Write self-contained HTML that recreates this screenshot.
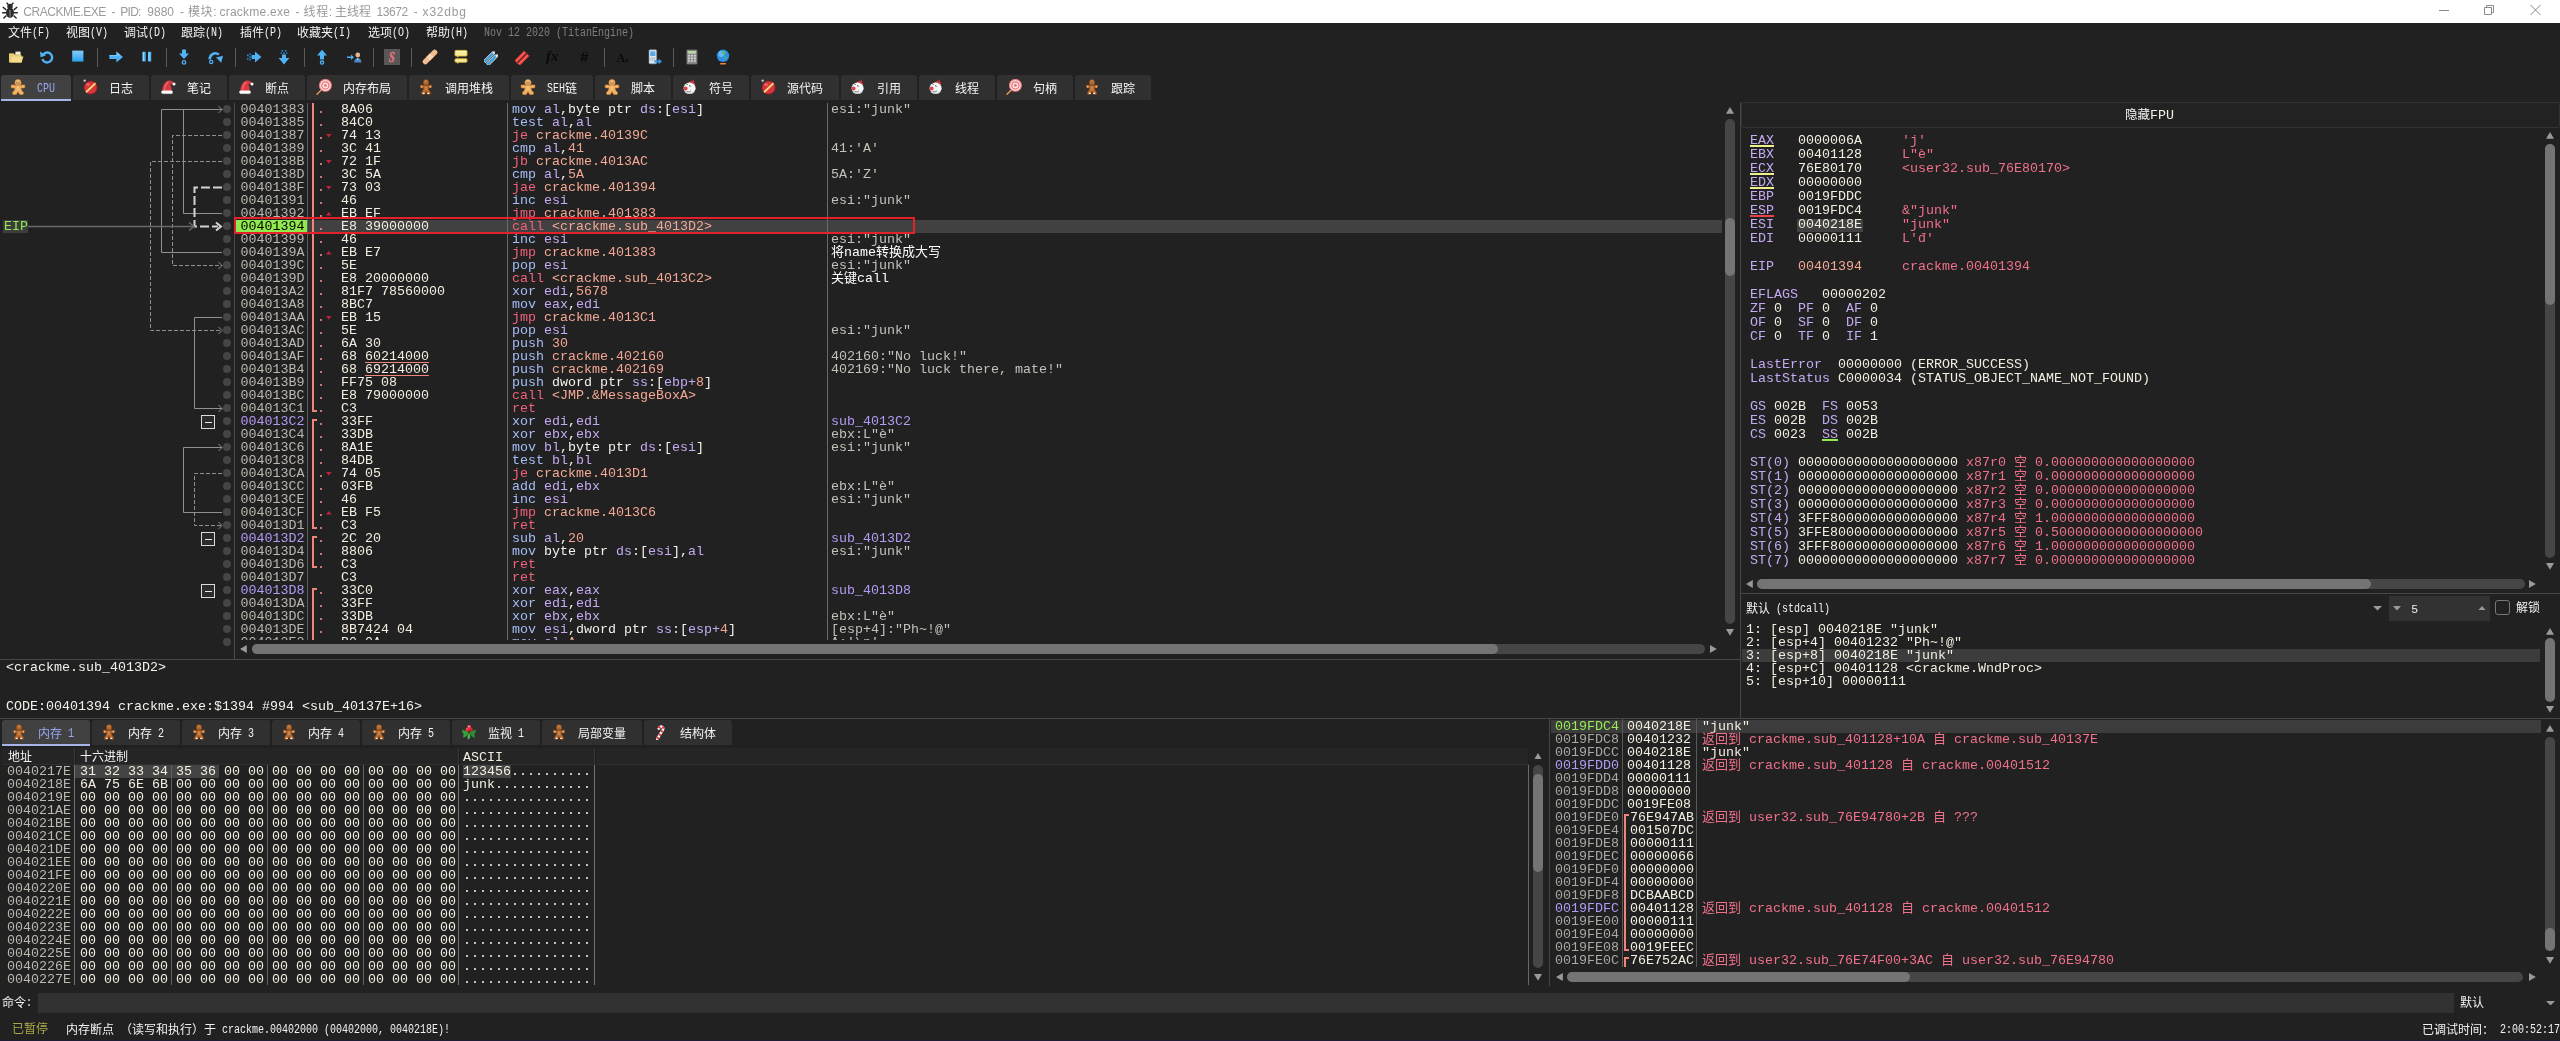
<!DOCTYPE html>
<html lang="zh-CN"><head><meta charset="utf-8"><title>x32dbg</title>
<style>
*{box-sizing:border-box;margin:0;padding:0}
html,body{width:2560px;height:1041px;overflow:hidden;background:#212121}
body{position:relative;font-family:"Liberation Mono","Noto Sans CJK SC",monospace;font-size:13.33px;line-height:13px;color:#f3eee0;-webkit-font-smoothing:antialiased}
#root{position:absolute;left:0;top:0;width:2560px;height:1041px;will-change:transform}
.a{position:absolute;white-space:pre}
.ui{font-family:"Liberation Mono","Noto Sans CJK SC",sans-serif;font-size:12px;line-height:14px;color:#f2f2f2}
.ui b,.tab b{display:inline-block;height:14px;vertical-align:top;position:relative;top:-1px;font-weight:normal;font-family:"Liberation Mono",monospace;font-size:12px;line-height:14px;white-space:pre}
.ui b i,.tab b i{display:inline-block;transform:scaleX(.833);transform-origin:0 50%;white-space:pre}
.cj{font-family:"Noto Sans CJK SC",sans-serif;font-size:12px}
i{font-style:normal}
.cj13{font-size:13px}
b{font-weight:normal}
.row{position:absolute;left:0;height:13px;white-space:pre}
.row span{position:absolute;top:0;white-space:pre}
.ln{position:absolute;background:#3f3f3f}
/* syntax */
.ad{color:#bcb8b0}
.by{color:#f3eee0}
.mn{color:#a6bef8}
.rg{color:#c4aaf2}
.wh{color:#f4f2ea}
.nm{color:#f2a593}
.jm{color:#f0627a}
.jt{color:#f4a896}
.rt{color:#f0627a}
.cm{color:#c2c2ba}
.uc{color:#ffffff}
.lb{color:#b49af4}
.pk{color:#f0708a}
.dot{color:#f4978a}
.tab{position:absolute;top:75px;height:25px;background:#303030;border-radius:3px 3px 0 0}
.tab.act{background:#414141;height:26px;border-bottom:2px solid #a6b4ea}
.tab .tx{position:absolute;left:36px;top:8px;font-size:12px;line-height:14px;color:#f4f4f4;white-space:pre;font-family:"Liberation Mono","Noto Sans CJK SC",sans-serif}
.tab.act .tx{color:#9aa6f2}
.tab svg{position:absolute;left:9px;top:4px}
.sb{position:absolute;background:#747474;border-radius:5px}
.sbt{position:absolute;background:#464646;border-radius:5px}
</style></head>
<body>
<div id="root">
<div class="a" style="left:0px;top:0px;width:2560px;height:23px;background:#ffffff;"></div>
<div class="a" style="left:1px;top:2px;line-height:0"><svg width="18" height="18" viewBox="0 0 16 16"><ellipse cx="8" cy="9.4" rx="3.6" ry="4.6" fill="#2b2b2b"/><circle cx="8" cy="4" r="2.4" fill="#2b2b2b"/><path d="M4.6 7L1.6 4.4M11.4 7l3-2.6M4.4 9.6H1M11.6 9.6H15M4.8 12l-2.6 2.6M11.2 12l2.6 2.6M6.6 2.4L5 .6M9.4 2.4L11 .6" stroke="#2b2b2b" stroke-width="1.3" fill="none"/><rect x="7.5" y="7" width="1" height="6" fill="#888"/></svg></div>
<span class="a " style="left:23.2px;top:4px;font-family:'Liberation Sans','Noto Sans CJK SC',sans-serif;font-size:12px;line-height:16px;color:#9a9a9a;letter-spacing:-0.42px">CRACKME.EXE</span>
<span class="a " style="left:111.5px;top:4px;font-family:'Liberation Sans','Noto Sans CJK SC',sans-serif;font-size:12px;line-height:16px;color:#9a9a9a;letter-spacing:0px">-</span>
<span class="a " style="left:120.2px;top:4px;font-family:'Liberation Sans','Noto Sans CJK SC',sans-serif;font-size:12px;line-height:16px;color:#9a9a9a;letter-spacing:-0.7px">PID:</span>
<span class="a " style="left:147.3px;top:4px;font-family:'Liberation Sans','Noto Sans CJK SC',sans-serif;font-size:12px;line-height:16px;color:#9a9a9a;letter-spacing:0px">9880</span>
<span class="a " style="left:180px;top:4px;font-family:'Liberation Sans','Noto Sans CJK SC',sans-serif;font-size:12px;line-height:16px;color:#9a9a9a;letter-spacing:0px">-</span>
<span class="a " style="left:188px;top:4px;font-family:'Liberation Sans','Noto Sans CJK SC',sans-serif;font-size:12px;line-height:16px;color:#9a9a9a;letter-spacing:0.6px">模块:</span>
<span class="a " style="left:219.4px;top:4px;font-family:'Liberation Sans','Noto Sans CJK SC',sans-serif;font-size:12px;line-height:16px;color:#9a9a9a;letter-spacing:0.25px">crackme.exe</span>
<span class="a " style="left:295.5px;top:4px;font-family:'Liberation Sans','Noto Sans CJK SC',sans-serif;font-size:12px;line-height:16px;color:#9a9a9a;letter-spacing:0px">-</span>
<span class="a " style="left:303.6px;top:4px;font-family:'Liberation Sans','Noto Sans CJK SC',sans-serif;font-size:12px;line-height:16px;color:#9a9a9a;letter-spacing:0.6px">线程:</span>
<span class="a " style="left:335px;top:4px;font-family:'Liberation Sans','Noto Sans CJK SC',sans-serif;font-size:12px;line-height:16px;color:#9a9a9a;letter-spacing:0px">主线程</span>
<span class="a " style="left:376.6px;top:4px;font-family:'Liberation Sans','Noto Sans CJK SC',sans-serif;font-size:12px;line-height:16px;color:#9a9a9a;letter-spacing:-0.45px">13672</span>
<span class="a " style="left:413.8px;top:4px;font-family:'Liberation Sans','Noto Sans CJK SC',sans-serif;font-size:12px;line-height:16px;color:#9a9a9a;letter-spacing:0px">-</span>
<span class="a " style="left:422.6px;top:4px;font-family:'Liberation Sans','Noto Sans CJK SC',sans-serif;font-size:12px;line-height:16px;color:#9a9a9a;letter-spacing:0.8px">x32dbg</span>
<svg class="a" style="left:2430px;top:0" width="130" height="23"><path d="M9 10.5h10" stroke="#8a8a8a" stroke-width="1"/><path d="M54.5 7.5h7v7h-7zM56.5 7.5v-2h7v7h-2" stroke="#8a8a8a" stroke-width="1" fill="none"/><path d="M100.5 5l10 10M110.5 5l-10 10" stroke="#8a8a8a" stroke-width="1"/></svg>
<span class="a ui" style="left:8px;top:27px;">文件<b style="width:18px"><i>(F)</i></b></span>
<span class="a ui" style="left:66px;top:27px;">视图<b style="width:18px"><i>(V)</i></b></span>
<span class="a ui" style="left:124px;top:27px;">调试<b style="width:18px"><i>(D)</i></b></span>
<span class="a ui" style="left:181px;top:27px;">跟踪<b style="width:18px"><i>(N)</i></b></span>
<span class="a ui" style="left:240px;top:27px;">插件<b style="width:18px"><i>(P)</i></b></span>
<span class="a ui" style="left:297px;top:27px;">收藏夹<b style="width:18px"><i>(I)</i></b></span>
<span class="a ui" style="left:368px;top:27px;">选项<b style="width:18px"><i>(O)</i></b></span>
<span class="a ui" style="left:426px;top:27px;">帮助<b style="width:18px"><i>(H)</i></b></span>
<span class="a ui" style="left:484px;top:27px;color:#7d7d7d"><b style="width:150px"><i>Nov 12 2020 (TitanEngine)</i></b></span>
<div class="a" style="left:8px;top:49px;width:16px;height:16px;line-height:0"><svg width="16" height="16" viewBox="0 0 16 16"><path d="M1 4.2h4.6l1.2 1.4H13v2H1z" fill="#d9b85a"/>
<path d="M7.4 2.6h5.2v3.2H7.4z" fill="#f6efd3"/>
<path d="M1 13.6V5h5l1 1.2h6.6v7.4z" fill="#e9cd72"/>
<path d="M2.6 13.6L4 7.6h11.4L13.6 13.6z" fill="#f3dc8c"/></svg></div>
<div class="a" style="left:39px;top:49px;width:16px;height:16px;line-height:0"><svg width="16" height="16" viewBox="0 0 16 16"><path d="M4.2 5.4A5 5 0 1 1 3.4 10" stroke="#4fb2f5" stroke-width="2.4" fill="none"/>
<path d="M1 2.4l.6 5.8 5.4-1.6z" fill="#4fb2f5"/></svg></div>
<div class="a" style="left:70px;top:49px;width:16px;height:16px;line-height:0"><svg width="16" height="16" viewBox="0 0 16 16"><defs><linearGradient id="sg" x1="0" y1="0" x2="0" y2="1"><stop offset="0" stop-color="#86ccfb"/><stop offset="1" stop-color="#27a2f2"/></linearGradient></defs><rect x="2.2" y="1.6" width="11.2" height="11" fill="url(#sg)"/></svg></div>
<div class="a" style="left:108px;top:49px;width:16px;height:16px;line-height:0"><svg width="16" height="16" viewBox="0 0 16 16"><path d="M1.4 6h7V2.6L15 8l-6.6 5.4V10h-7z" fill="#4fb2f5"/><path d="M1.4 6h7V2.6L12 5.6v1.4H1.4z" fill="#a4dcff" opacity=".5"/></svg></div>
<div class="a" style="left:138px;top:49px;width:16px;height:16px;line-height:0"><svg width="16" height="16" viewBox="0 0 16 16"><rect x="4.4" y="2.7" width="3.3" height="9.8" rx=".5" fill="#4fb2f5"/><rect x="10" y="2.7" width="3.2" height="9.8" rx=".5" fill="#4fb2f5"/><path d="M5.4 3.2v8.8M11 3.2v8.8" stroke="#a4dcff" stroke-width=".9"/></svg></div>
<div class="a" style="left:176px;top:49px;width:16px;height:16px;line-height:0"><svg width="16" height="16" viewBox="0 0 16 16"><path d="M6 .6h4v4h3L8 10 3 4.6h3z" fill="#4fb2f5"/><circle cx="8" cy="13.4" r="1.7" fill="none" stroke="#4fb2f5" stroke-width="1.3"/></svg></div>
<div class="a" style="left:208px;top:49px;width:16px;height:16px;line-height:0"><svg width="16" height="16" viewBox="0 0 16 16"><path d="M1.6 10.4C2 5 7 2.6 10.8 5.6" stroke="#4fb2f5" stroke-width="2.6" fill="none"/><path d="M8 8.4l7-1.6-1.8 7z" fill="#4fb2f5"/><circle cx="3.2" cy="13" r="1.6" fill="none" stroke="#4fb2f5" stroke-width="1.2"/></svg></div>
<div class="a" style="left:246px;top:49px;width:16px;height:16px;line-height:0"><svg width="16" height="16" viewBox="0 0 16 16"><path d="M5.6 6H9V2.6L15.4 8 9 13.4V10H5.6z" fill="#4fb2f5"/><path d="M1 5.6h1.6v1.6H1zM3.2 7.2h1.6v1.6H3.2zM1 9h1.6v1.6H1zM3.4 4.6h1.4v1.4H3.4zM3.4 10h1.4v1.4H3.4z" fill="#2b8fdc"/></svg></div>
<div class="a" style="left:276px;top:49px;width:16px;height:16px;line-height:0"><svg width="16" height="16" viewBox="0 0 16 16"><path d="M6 5.6h4V9h3.4L8 15.4 2.6 9H6z" fill="#4fb2f5"/><path d="M5.6 1h1.6v1.6H5.6zM7.2 3.2h1.6v1.6H7.2zM9 1h1.6v1.6H9zM4.6 3.4h1.4v1.4H4.6zM10 3.4h1.4v1.4H10z" fill="#2b8fdc"/></svg></div>
<div class="a" style="left:314px;top:49px;width:16px;height:16px;line-height:0"><svg width="16" height="16" viewBox="0 0 16 16"><path d="M6 10.4h4v-4h3L8 .8 3 6.4h3z" fill="#4fb2f5"/><circle cx="8" cy="13.6" r="1.6" fill="none" stroke="#4fb2f5" stroke-width="1.3"/></svg></div>
<div class="a" style="left:346px;top:49px;width:16px;height:16px;line-height:0"><svg width="16" height="16" viewBox="0 0 16 16"><path d="M1 7.4h4V5.4l3 2.8-3 2.8V9H1z" fill="#4fb2f5"/><circle cx="11.8" cy="6" r="2.4" fill="#e9b48a"/><path d="M8.2 13.6c0-3 1.4-4.4 3.6-4.4s3.6 1.4 3.6 4.4z" fill="#4a8ad0"/><path d="M11 9.4h1.6l-.8 2.2z" fill="#fff"/></svg></div>
<div class="a" style="left:384px;top:49px;width:16px;height:16px;line-height:0"><svg width="16" height="16" viewBox="0 0 16 16"><rect x="0" y="0" width="16" height="16" fill="#585656"/><text transform="translate(8 13) scale(.72 1)" x="0" y="0" font-size="14.5" font-weight="bold" font-style="italic" font-family="Liberation Serif,serif" fill="#e0707c" stroke="#e0707c" stroke-width=".7" text-anchor="middle">S</text></svg></div>
<div class="a" style="left:422px;top:49px;width:16px;height:16px;line-height:0"><svg width="16" height="16" viewBox="0 0 16 16"><g transform="rotate(-45 8 8)"><rect x="-1.2" y="5.4" width="18.4" height="5.2" rx="2.6" fill="#f4bd8e"/><rect x="5.2" y="5.4" width="5.6" height="5.2" fill="#f9d3b0"/><path d="M5.2 5.4v5.2M10.8 5.4v5.2" stroke="#e8a878" stroke-width=".5"/></g></svg></div>
<div class="a" style="left:453px;top:49px;width:16px;height:16px;line-height:0"><svg width="16" height="16" viewBox="0 0 16 16"><rect x="2" y="1.4" width="12" height="5.6" rx="1" fill="#f6ec9c" stroke="#e3bc3c" stroke-width=".9"/><path d="M3 2.6h10" stroke="#fdf8d0" stroke-width="1"/><rect x="2" y="9.8" width="12" height="3.4" rx="1" fill="#f6ec9c" stroke="#e3bc3c" stroke-width=".9"/><path d="M4.4 7.2v1.6l1.6-1.6zM4.4 13.4v1.6l1.6-1.6z" fill="#f6ec9c"/></svg></div>
<div class="a" style="left:484px;top:49px;width:16px;height:16px;line-height:0"><svg width="16" height="16" viewBox="0 0 16 16"><g transform="rotate(-45 8 8)"><path d="M-.6 4.6h12.4l1.8 1.5-1.8 1.5H-.6z" fill="#3f9edc" stroke="#f4fbff" stroke-width=".7"/><path d="M-.6 8.8h12.4l1.8 1.5-1.8 1.5H-.6z" fill="#3f9edc" stroke="#f4fbff" stroke-width=".7"/><circle cx="11.8" cy="6.1" r=".8" fill="#f4fbff"/><circle cx="11.8" cy="10.3" r=".8" fill="#f4fbff"/></g></svg></div>
<div class="a" style="left:515px;top:49px;width:16px;height:16px;line-height:0"><svg width="16" height="16" viewBox="0 0 16 16"><g transform="rotate(-45 8 8)"><path d="M-1.4 4.4h15.2l-1.2 1.6 1.2 1.6H-1.4l1.4-1.6z" fill="#f2413c"/><path d="M-1.4 8.6h15.2l-1.2 1.6 1.2 1.6H-1.4l1.4-1.6z" fill="#f2413c"/><path d="M0 6h12.6M0 10.2h12.6" stroke="#ff8e86" stroke-width=".6"/></g></svg></div>
<div class="a" style="left:545px;top:49px;width:16px;height:16px;line-height:0"><svg width="16" height="16" viewBox="0 0 16 16"><text x="1" y="12" font-size="15" font-style="italic" font-weight="bold" font-family="Liberation Serif,serif" fill="#0a0a0a">fx</text></svg></div>
<div class="a" style="left:577px;top:49px;width:16px;height:16px;line-height:0"><svg width="16" height="16" viewBox="0 0 16 16"><text x="3" y="13.4" font-size="15" font-style="italic" font-weight="bold" font-family="Liberation Sans,sans-serif" fill="#0a0a0a">#</text></svg></div>
<div class="a" style="left:615px;top:49px;width:16px;height:16px;line-height:0"><svg width="16" height="16" viewBox="0 0 16 16"><text x="1.4" y="12.6" font-size="12" font-weight="bold" font-family="Liberation Serif,serif" fill="#0a0a0a">A</text><text x="10.4" y="12.6" font-size="7" font-weight="bold" font-family="Liberation Serif,serif" fill="#0a0a0a">z</text></svg></div>
<div class="a" style="left:647px;top:49px;width:16px;height:16px;line-height:0"><svg width="16" height="16" viewBox="0 0 16 16"><rect x="2" y=".8" width="7.6" height="14" rx="1" fill="#dfe7ee" stroke="#8a99a8" stroke-width=".6"/><rect x="3.2" y="2.4" width="5.2" height="4.6" fill="#5aa8ea"/><path d="M3.4 8.6h1.2v1H3.4zM5.2 8.6h1.2v1H5.2zM7 8.6h1.2v1H7zM3.4 10.4h1.2v1H3.4zM5.2 10.4h1.2v1H5.2zM7 10.4h1.2v1H7z" fill="#8a99a8"/><path d="M7.4 11.4h4.2V9.6l3.6 2.8-3.6 2.8v-1.8H7.4z" fill="#2f8fe0"/></svg></div>
<div class="a" style="left:684px;top:49px;width:16px;height:16px;line-height:0"><svg width="16" height="16" viewBox="0 0 16 16"><rect x="2.6" y=".8" width="10.6" height="14.4" rx=".8" fill="#8c8c8c" stroke="#4e4e4e" stroke-width=".6"/><rect x="3.8" y="2" width="8.2" height="2.6" fill="#b7d6a4"/><path d="M4 6h1.8v1.6H4zM7 6h1.8v1.6H7zM10 6h1.8v1.6H10zM4 8.6h1.8v1.6H4zM7 8.6h1.8v1.6H7zM10 8.6h1.8v1.6H10zM4 11.2h1.8v1.6H4zM7 11.2h1.8v1.6H7zM10 11.2h1.8v1.6H10z" fill="#d9d9d9"/></svg></div>
<div class="a" style="left:715px;top:49px;width:16px;height:16px;line-height:0"><svg width="16" height="16" viewBox="0 0 16 16"><circle cx="8" cy="6.8" r="6.2" fill="#2d8fe6"/><circle cx="6.4" cy="5" r="3" fill="#6fc0f8" opacity=".8"/><path d="M7.6 2.4c1.6-.6 3 .2 3.4 1.4l-1.4 1.6-1.6-.4-1-1.6zM9.4 7.4l2 .4-.2 2-1.6.8z" fill="#4cbf5a"/><rect x="5" y="14" width="6" height="1.4" rx=".6" fill="#f08a2e"/></svg></div>
<div class="a" style="left:97px;top:48px;width:1px;height:19px;background:#5a5a5a;"></div>
<div class="a" style="left:166px;top:48px;width:1px;height:19px;background:#5a5a5a;"></div>
<div class="a" style="left:235px;top:48px;width:1px;height:19px;background:#5a5a5a;"></div>
<div class="a" style="left:304px;top:48px;width:1px;height:19px;background:#5a5a5a;"></div>
<div class="a" style="left:373px;top:48px;width:1px;height:19px;background:#5a5a5a;"></div>
<div class="a" style="left:411px;top:48px;width:1px;height:19px;background:#5a5a5a;"></div>
<div class="a" style="left:604px;top:48px;width:1px;height:19px;background:#5a5a5a;"></div>
<div class="a" style="left:673px;top:48px;width:1px;height:19px;background:#5a5a5a;"></div>
<div class="tab act" style="left:1px;top:75px;width:70px"><svg width="16" height="16" viewBox="0 0 16 16"><g stroke="#df8a33" stroke-width=".6">
<circle cx="8" cy="3.6" r="3.1" fill="#f1b267"/>
<path d="M1 6.3c2-.6 4-.4 5 .1h4c1-.5 3-.7 5-.1l-.3 2.4c-1.6.3-2.8.3-3.7 0l.4 2.4 2.2 2.6-.6 1.9h-3.2L8 12.6 6.2 15.6H3l-.6-1.9 2.2-2.6.4-2.4c-.9.3-2.1.3-3.7 0z" fill="#f1b267"/>
<g stroke="none"><ellipse cx="8" cy="3.2" rx="2.2" ry="1.9" fill="#f8cf94" opacity=".75"/>
<circle cx="6.9" cy="3.1" r=".55" fill="#5a2d0c"/><circle cx="9.1" cy="3.1" r=".55" fill="#5a2d0c"/>
<circle cx="8" cy="8" r=".6" fill="#fff3d6"/><circle cx="8" cy="10" r=".6" fill="#fff3d6"/></g>
<path d="M6.6 4.5q1.4 1 2.8 0" stroke="#5a2d0c" stroke-width=".6" fill="none"/>
<g stroke="none"></g></g></svg><span class="tx"><b style="width:18px"><i>CPU</i></b></span></div>
<div class="tab" style="left:73px;top:75px;width:76px"><svg width="16" height="16" viewBox="0 0 16 16"><rect x="1.6" y=".6" width="2.2" height="2.2" transform="rotate(-40 2.7 1.7)" fill="#bdbdbd"/>
<circle cx="8.6" cy="8.6" r="6.6" fill="#d5343a"/>
<circle cx="8.6" cy="8.6" r="6.6" fill="none" stroke="#8e1a1f" stroke-width=".8"/>
<path d="M3.4 12.6L12.8 3.6l1.3 1.5L4.8 14z" fill="#f3c969"/>
<path d="M4 13.2L13.4 4.2" stroke="#fff1b8" stroke-width=".7"/>
<ellipse cx="6" cy="5.6" rx="2" ry="1.3" fill="#ef7b7e" opacity=".7"/></svg><span class="tx">日志</span></div>
<div class="tab" style="left:151px;top:75px;width:76px"><svg width="16" height="16" viewBox="0 0 16 16"><path d="M2.2 12.2C2.6 6.5 5 2 9.2 1.6c2.3-.2 4 1 4.8 3.2l-1.4.9c-.8-1-1.7-1.2-2.4-.8 1.2 2.2 1.7 4.6 1.7 7.3z" fill="#d73a3f"/>
<path d="M4.5 11c.3-3.6 1.7-6.6 4-8" stroke="#f07277" stroke-width="1.1" fill="none"/>
<rect x="1.2" y="11.4" width="11.6" height="3.4" rx="1.7" fill="#fdfdfd"/>
<circle cx="14" cy="5" r="1.5" fill="#fdfdfd"/>
<path d="M2 14.6h10.4" stroke="#c9c9c9" stroke-width=".7"/></svg><span class="tx">笔记</span></div>
<div class="tab" style="left:229px;top:75px;width:76px"><svg width="16" height="16" viewBox="0 0 16 16"><path d="M2.2 12.2C2.6 6.5 5 2 9.2 1.6c2.3-.2 4 1 4.8 3.2l-1.4.9c-.8-1-1.7-1.2-2.4-.8 1.2 2.2 1.7 4.6 1.7 7.3z" fill="#d73a3f"/>
<path d="M4.5 11c.3-3.6 1.7-6.6 4-8" stroke="#f07277" stroke-width="1.1" fill="none"/>
<rect x="1.2" y="11.4" width="11.6" height="3.4" rx="1.7" fill="#fdfdfd"/>
<circle cx="14" cy="5" r="1.5" fill="#fdfdfd"/>
<path d="M2 14.6h10.4" stroke="#c9c9c9" stroke-width=".7"/></svg><span class="tx">断点</span></div>
<div class="tab" style="left:307px;top:75px;width:100px"><svg width="16" height="16" viewBox="0 0 16 16"><path d="M1 15.2L6.2 10" stroke="#e8a25a" stroke-width="1.3" stroke-linecap="round"/>
<circle cx="9.4" cy="6.4" r="5.9" fill="#fbe4e4"/>
<circle cx="9.4" cy="6.4" r="5.9" fill="none" stroke="#ee7c80" stroke-width="1.1"/>
<circle cx="9.4" cy="6.4" r="3.6" fill="none" stroke="#ee6b70" stroke-width="1.2"/>
<circle cx="9.4" cy="6.4" r="1.4" fill="#ee6b70"/></svg><span class="tx">内存布局</span></div>
<div class="tab" style="left:409px;top:75px;width:100px"><svg width="16" height="16" viewBox="0 0 16 16"><g transform="translate(8 0) scale(.86 1) translate(-8 0)" stroke="#7a3f14" stroke-width=".6">
<circle cx="8" cy="3.6" r="3.1" fill="#b96a2c"/>
<path d="M1 6.3c2-.6 4-.4 5 .1h4c1-.5 3-.7 5-.1l-.3 2.4c-1.6.3-2.8.3-3.7 0l.4 2.4 2.2 2.6-.6 1.9h-3.2L8 12.6 6.2 15.6H3l-.6-1.9 2.2-2.6.4-2.4c-.9.3-2.1.3-3.7 0z" fill="#b96a2c"/>
<g stroke="none"><ellipse cx="8" cy="3.2" rx="2.2" ry="1.9" fill="#dc9650" opacity=".75"/>
<circle cx="6.9" cy="3.1" r=".55" fill="#5a2d0c"/><circle cx="9.1" cy="3.1" r=".55" fill="#5a2d0c"/>
<circle cx="8" cy="8" r=".6" fill="#fff3d6"/><circle cx="8" cy="10" r=".6" fill="#fff3d6"/></g>
<path d="M6.6 4.5q1.4 1 2.8 0" stroke="#5a2d0c" stroke-width=".6" fill="none"/>
<g stroke="none"><path d="M2.6 7.4l1 .9M13.4 7.4l-1 .9M4.4 14.4h2M9.6 14.4h2" stroke="#fff" stroke-width="1.1" fill="none"/></g></g></svg><span class="tx">调用堆栈</span></div>
<div class="tab" style="left:511px;top:75px;width:82px"><svg width="16" height="16" viewBox="0 0 16 16"><g stroke="#df8a33" stroke-width=".6">
<circle cx="8" cy="3.6" r="3.1" fill="#f1b267"/>
<path d="M1 6.3c2-.6 4-.4 5 .1h4c1-.5 3-.7 5-.1l-.3 2.4c-1.6.3-2.8.3-3.7 0l.4 2.4 2.2 2.6-.6 1.9h-3.2L8 12.6 6.2 15.6H3l-.6-1.9 2.2-2.6.4-2.4c-.9.3-2.1.3-3.7 0z" fill="#f1b267"/>
<g stroke="none"><ellipse cx="8" cy="3.2" rx="2.2" ry="1.9" fill="#f8cf94" opacity=".75"/>
<circle cx="6.9" cy="3.1" r=".55" fill="#5a2d0c"/><circle cx="9.1" cy="3.1" r=".55" fill="#5a2d0c"/>
<circle cx="8" cy="8" r=".6" fill="#fff3d6"/><circle cx="8" cy="10" r=".6" fill="#fff3d6"/></g>
<path d="M6.6 4.5q1.4 1 2.8 0" stroke="#5a2d0c" stroke-width=".6" fill="none"/>
<g stroke="none"></g></g></svg><span class="tx"><b style="width:18px"><i>SEH</i></b>链</span></div>
<div class="tab" style="left:595px;top:75px;width:76px"><svg width="16" height="16" viewBox="0 0 16 16"><g stroke="#df8a33" stroke-width=".6">
<circle cx="8" cy="3.6" r="3.1" fill="#f1b267"/>
<path d="M1 6.3c2-.6 4-.4 5 .1h4c1-.5 3-.7 5-.1l-.3 2.4c-1.6.3-2.8.3-3.7 0l.4 2.4 2.2 2.6-.6 1.9h-3.2L8 12.6 6.2 15.6H3l-.6-1.9 2.2-2.6.4-2.4c-.9.3-2.1.3-3.7 0z" fill="#f1b267"/>
<g stroke="none"><ellipse cx="8" cy="3.2" rx="2.2" ry="1.9" fill="#f8cf94" opacity=".75"/>
<circle cx="6.9" cy="3.1" r=".55" fill="#5a2d0c"/><circle cx="9.1" cy="3.1" r=".55" fill="#5a2d0c"/>
<circle cx="8" cy="8" r=".6" fill="#fff3d6"/><circle cx="8" cy="10" r=".6" fill="#fff3d6"/></g>
<path d="M6.6 4.5q1.4 1 2.8 0" stroke="#5a2d0c" stroke-width=".6" fill="none"/>
<g stroke="none"></g></g></svg><span class="tx">脚本</span></div>
<div class="tab" style="left:673px;top:75px;width:76px"><svg width="16" height="16" viewBox="0 0 16 16"><path d="M6 3.4L12.6.6l1.6 5.8z" fill="#c4383c"/>
<path d="M11.6 1.2l1.2-.6 1.6 5.6-1 .2z" fill="#3a2a2a"/>
<ellipse cx="7.6" cy="9.2" rx="6" ry="5.6" fill="#f4f6f6"/>
<path d="M3 12.6c2.4 2.4 6.6 2.6 9.2 0" stroke="#c7cccc" stroke-width="1.2" fill="none"/>
<circle cx="3.6" cy="9.6" r="2" fill="#e3444b"/>
<path d="M7 6.6l1.6.8M5 6l.2-.9" stroke="#333" stroke-width=".9"/>
<path d="M4.6 12.4q2.4 1.4 4.6-.6" stroke="#555" stroke-width=".7" fill="none"/></svg><span class="tx">符号</span></div>
<div class="tab" style="left:751px;top:75px;width:88px"><svg width="16" height="16" viewBox="0 0 16 16"><rect x="1.6" y=".6" width="2.2" height="2.2" transform="rotate(-40 2.7 1.7)" fill="#bdbdbd"/>
<circle cx="8.6" cy="8.6" r="6.6" fill="#d5343a"/>
<circle cx="8.6" cy="8.6" r="6.6" fill="none" stroke="#8e1a1f" stroke-width=".8"/>
<path d="M3.4 12.6L12.8 3.6l1.3 1.5L4.8 14z" fill="#f3c969"/>
<path d="M4 13.2L13.4 4.2" stroke="#fff1b8" stroke-width=".7"/>
<ellipse cx="6" cy="5.6" rx="2" ry="1.3" fill="#ef7b7e" opacity=".7"/></svg><span class="tx">源代码</span></div>
<div class="tab" style="left:841px;top:75px;width:76px"><svg width="16" height="16" viewBox="0 0 16 16"><path d="M6 3.4L12.6.6l1.6 5.8z" fill="#c4383c"/>
<path d="M11.6 1.2l1.2-.6 1.6 5.6-1 .2z" fill="#3a2a2a"/>
<ellipse cx="7.6" cy="9.2" rx="6" ry="5.6" fill="#f4f6f6"/>
<path d="M3 12.6c2.4 2.4 6.6 2.6 9.2 0" stroke="#c7cccc" stroke-width="1.2" fill="none"/>
<circle cx="3.6" cy="9.6" r="2" fill="#e3444b"/>
<path d="M7 6.6l1.6.8M5 6l.2-.9" stroke="#333" stroke-width=".9"/>
<path d="M4.6 12.4q2.4 1.4 4.6-.6" stroke="#555" stroke-width=".7" fill="none"/></svg><span class="tx">引用</span></div>
<div class="tab" style="left:919px;top:75px;width:76px"><svg width="16" height="16" viewBox="0 0 16 16"><path d="M6 3.4L12.6.6l1.6 5.8z" fill="#c4383c"/>
<path d="M11.6 1.2l1.2-.6 1.6 5.6-1 .2z" fill="#3a2a2a"/>
<ellipse cx="7.6" cy="9.2" rx="6" ry="5.6" fill="#f4f6f6"/>
<path d="M3 12.6c2.4 2.4 6.6 2.6 9.2 0" stroke="#c7cccc" stroke-width="1.2" fill="none"/>
<circle cx="3.6" cy="9.6" r="2" fill="#e3444b"/>
<path d="M7 6.6l1.6.8M5 6l.2-.9" stroke="#333" stroke-width=".9"/>
<path d="M4.6 12.4q2.4 1.4 4.6-.6" stroke="#555" stroke-width=".7" fill="none"/></svg><span class="tx">线程</span></div>
<div class="tab" style="left:997px;top:75px;width:76px"><svg width="16" height="16" viewBox="0 0 16 16"><path d="M1 15.2L6.2 10" stroke="#e8a25a" stroke-width="1.3" stroke-linecap="round"/>
<circle cx="9.4" cy="6.4" r="5.9" fill="#fbe4e4"/>
<circle cx="9.4" cy="6.4" r="5.9" fill="none" stroke="#ee7c80" stroke-width="1.1"/>
<circle cx="9.4" cy="6.4" r="3.6" fill="none" stroke="#ee6b70" stroke-width="1.2"/>
<circle cx="9.4" cy="6.4" r="1.4" fill="#ee6b70"/></svg><span class="tx">句柄</span></div>
<div class="tab" style="left:1075px;top:75px;width:76px"><svg width="16" height="16" viewBox="0 0 16 16"><g transform="translate(8 0) scale(.86 1) translate(-8 0)" stroke="#7a3f14" stroke-width=".6">
<circle cx="8" cy="3.6" r="3.1" fill="#b96a2c"/>
<path d="M1 6.3c2-.6 4-.4 5 .1h4c1-.5 3-.7 5-.1l-.3 2.4c-1.6.3-2.8.3-3.7 0l.4 2.4 2.2 2.6-.6 1.9h-3.2L8 12.6 6.2 15.6H3l-.6-1.9 2.2-2.6.4-2.4c-.9.3-2.1.3-3.7 0z" fill="#b96a2c"/>
<g stroke="none"><ellipse cx="8" cy="3.2" rx="2.2" ry="1.9" fill="#dc9650" opacity=".75"/>
<circle cx="6.9" cy="3.1" r=".55" fill="#5a2d0c"/><circle cx="9.1" cy="3.1" r=".55" fill="#5a2d0c"/>
<circle cx="8" cy="8" r=".6" fill="#fff3d6"/><circle cx="8" cy="10" r=".6" fill="#fff3d6"/></g>
<path d="M6.6 4.5q1.4 1 2.8 0" stroke="#5a2d0c" stroke-width=".6" fill="none"/>
<g stroke="none"><path d="M2.6 7.4l1 .9M13.4 7.4l-1 .9M4.4 14.4h2M9.6 14.4h2" stroke="#fff" stroke-width="1.1" fill="none"/></g></g></svg><span class="tx">跟踪</span></div>
<div class="a" style="left:0;top:102px;width:1722px;height:538px;overflow:hidden">
<div class="a" style="left:308px;top:118.0px;width:1414px;height:13px;background:#414141"></div>
<div class="a" style="left:234px;top:1px;width:1px;height:537px;background:#4a4a4a"></div>
<div class="a" style="left:307px;top:1px;width:1px;height:537px;background:#5c5c5c"></div>
<div class="a" style="left:507px;top:1px;width:1px;height:537px;background:#6a6a6a"></div>
<div class="a" style="left:827px;top:1px;width:1px;height:537px;background:#6a6a6a"></div>
<div class="a" style="left:312px;top:0.5px;width:2px;height:309.0px;background:#f2837a"></div>
<div class="a" style="left:312px;top:307.5px;width:5px;height:2px;background:#f2837a"></div>
<div class="a" style="left:312px;top:316.5px;width:2px;height:110.0px;background:#f2837a"></div>
<div class="a" style="left:312px;top:316.5px;width:5px;height:2px;background:#f2837a"></div>
<div class="a" style="left:312px;top:424.5px;width:5px;height:2px;background:#f2837a"></div>
<div class="a" style="left:312px;top:433.5px;width:2px;height:32.0px;background:#f2837a"></div>
<div class="a" style="left:312px;top:433.5px;width:5px;height:2px;background:#f2837a"></div>
<div class="a" style="left:312px;top:463.5px;width:5px;height:2px;background:#f2837a"></div>
<div class="a" style="left:312px;top:485.5px;width:2px;height:61.0px;background:#f2837a"></div>
<div class="a" style="left:312px;top:485.5px;width:5px;height:2px;background:#f2837a"></div>
<div class="a" style="left:223.3px;top:3.1px;width:8px;height:8px;border-radius:4px;background:#454545"></div>
<span class="a ad" style="left:240.5px;top:0.5px;">00401383</span>
<span class="a dot" style="left:317px;top:0.5px;">.</span>
<span class="a by" style="left:341px;top:0.5px;">8A06</span>
<span class="a " style="left:512px;top:0.5px;"><i class="mn">mov</i> <i class="rg">al</i><i class="wh">,</i><i class="wh">byte ptr</i> <i class="rg">ds</i><i class="wh">:</i><i class="wh">[</i><i class="rg">esi</i><i class="wh">]</i></span>
<span class="a cm" style="left:831px;top:0.5px;">esi:"junk"</span>
<div class="a" style="left:223.3px;top:16.1px;width:8px;height:8px;border-radius:4px;background:#454545"></div>
<span class="a ad" style="left:240.5px;top:13.5px;">00401385</span>
<span class="a dot" style="left:317px;top:13.5px;">.</span>
<span class="a by" style="left:341px;top:13.5px;">84C0</span>
<span class="a " style="left:512px;top:13.5px;"><i class="mn">test</i> <i class="rg">al</i><i class="wh">,</i><i class="rg">al</i></span>
<div class="a" style="left:223.3px;top:29.1px;width:8px;height:8px;border-radius:4px;background:#454545"></div>
<span class="a ad" style="left:240.5px;top:26.5px;">00401387</span>
<span class="a dot" style="left:317px;top:26.5px;">.</span>
<svg class="a" style="left:325.5px;top:31.5px" width="6" height="4"><path d="M0 0L5.6 0L2.8 3.4z" fill="#c2213c"/></svg>
<span class="a by" style="left:341px;top:26.5px;">74 13</span>
<span class="a " style="left:512px;top:26.5px;"><i class="jm">je</i> <i class="jt">crackme.40139C</i></span>
<div class="a" style="left:223.3px;top:42.1px;width:8px;height:8px;border-radius:4px;background:#454545"></div>
<span class="a ad" style="left:240.5px;top:39.5px;">00401389</span>
<span class="a dot" style="left:317px;top:39.5px;">.</span>
<span class="a by" style="left:341px;top:39.5px;">3C 41</span>
<span class="a " style="left:512px;top:39.5px;"><i class="mn">cmp</i> <i class="rg">al</i><i class="wh">,</i><i class="nm">41</i></span>
<span class="a cm" style="left:831px;top:39.5px;">41:'A'</span>
<div class="a" style="left:223.3px;top:55.1px;width:8px;height:8px;border-radius:4px;background:#454545"></div>
<span class="a ad" style="left:240.5px;top:52.5px;">0040138B</span>
<span class="a dot" style="left:317px;top:52.5px;">.</span>
<svg class="a" style="left:325.5px;top:57.5px" width="6" height="4"><path d="M0 0L5.6 0L2.8 3.4z" fill="#c2213c"/></svg>
<span class="a by" style="left:341px;top:52.5px;">72 1F</span>
<span class="a " style="left:512px;top:52.5px;"><i class="jm">jb</i> <i class="jt">crackme.4013AC</i></span>
<div class="a" style="left:223.3px;top:68.1px;width:8px;height:8px;border-radius:4px;background:#454545"></div>
<span class="a ad" style="left:240.5px;top:65.5px;">0040138D</span>
<span class="a dot" style="left:317px;top:65.5px;">.</span>
<span class="a by" style="left:341px;top:65.5px;">3C 5A</span>
<span class="a " style="left:512px;top:65.5px;"><i class="mn">cmp</i> <i class="rg">al</i><i class="wh">,</i><i class="nm">5A</i></span>
<span class="a cm" style="left:831px;top:65.5px;">5A:'Z'</span>
<div class="a" style="left:223.3px;top:81.1px;width:8px;height:8px;border-radius:4px;background:#454545"></div>
<span class="a ad" style="left:240.5px;top:78.5px;">0040138F</span>
<span class="a dot" style="left:317px;top:78.5px;">.</span>
<svg class="a" style="left:325.5px;top:83.5px" width="6" height="4"><path d="M0 0L5.6 0L2.8 3.4z" fill="#c2213c"/></svg>
<span class="a by" style="left:341px;top:78.5px;">73 03</span>
<span class="a " style="left:512px;top:78.5px;"><i class="jm">jae</i> <i class="jt">crackme.401394</i></span>
<div class="a" style="left:223.3px;top:94.1px;width:8px;height:8px;border-radius:4px;background:#454545"></div>
<span class="a ad" style="left:240.5px;top:91.5px;">00401391</span>
<span class="a dot" style="left:317px;top:91.5px;">.</span>
<span class="a by" style="left:341px;top:91.5px;">46</span>
<span class="a " style="left:512px;top:91.5px;"><i class="mn">inc</i> <i class="rg">esi</i></span>
<span class="a cm" style="left:831px;top:91.5px;">esi:"junk"</span>
<div class="a" style="left:223.3px;top:107.1px;width:8px;height:8px;border-radius:4px;background:#454545"></div>
<span class="a ad" style="left:240.5px;top:104.5px;">00401392</span>
<span class="a dot" style="left:317px;top:104.5px;">.</span>
<svg class="a" style="left:325.5px;top:109.5px" width="6" height="4"><path d="M0 3.4L5.6 3.4L2.8 0z" fill="#c2213c"/></svg>
<span class="a by" style="left:341px;top:104.5px;">EB EF</span>
<span class="a " style="left:512px;top:104.5px;"><i class="jm">jmp</i> <i class="jt">crackme.401383</i></span>
<div class="a" style="left:223.3px;top:120.1px;width:8px;height:8px;border-radius:4px;background:#454545"></div>
<div class="a" style="left:235px;top:118.0px;width:72px;height:12px;background:#8fea4d"></div>
<span class="a " style="left:240.5px;top:117.5px;color:#000">00401394</span>
<span class="a dot" style="left:317px;top:117.5px;">.</span>
<span class="a by" style="left:341px;top:117.5px;">E8 39000000</span>
<span class="a " style="left:512px;top:117.5px;"><i class="jm">call</i> <i class="jt">&lt;crackme.sub_4013D2&gt;</i></span>
<div class="a" style="left:223.3px;top:133.1px;width:8px;height:8px;border-radius:4px;background:#454545"></div>
<span class="a ad" style="left:240.5px;top:130.5px;">00401399</span>
<span class="a dot" style="left:317px;top:130.5px;">.</span>
<span class="a by" style="left:341px;top:130.5px;">46</span>
<span class="a " style="left:512px;top:130.5px;"><i class="mn">inc</i> <i class="rg">esi</i></span>
<span class="a cm" style="left:831px;top:130.5px;">esi:"junk"</span>
<div class="a" style="left:223.3px;top:146.1px;width:8px;height:8px;border-radius:4px;background:#454545"></div>
<span class="a ad" style="left:240.5px;top:143.5px;">0040139A</span>
<span class="a dot" style="left:317px;top:143.5px;">.</span>
<svg class="a" style="left:325.5px;top:148.5px" width="6" height="4"><path d="M0 3.4L5.6 3.4L2.8 0z" fill="#c2213c"/></svg>
<span class="a by" style="left:341px;top:143.5px;">EB E7</span>
<span class="a " style="left:512px;top:143.5px;"><i class="jm">jmp</i> <i class="jt">crackme.401383</i></span>
<span class="a uc" style="left:831px;top:143.5px;"><i class="cj13">将</i>name<i class="cj13">转换成大写</i></span>
<div class="a" style="left:223.3px;top:159.1px;width:8px;height:8px;border-radius:4px;background:#454545"></div>
<span class="a ad" style="left:240.5px;top:156.5px;">0040139C</span>
<span class="a dot" style="left:317px;top:156.5px;">.</span>
<span class="a by" style="left:341px;top:156.5px;">5E</span>
<span class="a " style="left:512px;top:156.5px;"><i class="mn">pop</i> <i class="rg">esi</i></span>
<span class="a cm" style="left:831px;top:156.5px;">esi:"junk"</span>
<div class="a" style="left:223.3px;top:172.1px;width:8px;height:8px;border-radius:4px;background:#454545"></div>
<span class="a ad" style="left:240.5px;top:169.5px;">0040139D</span>
<span class="a dot" style="left:317px;top:169.5px;">.</span>
<span class="a by" style="left:341px;top:169.5px;">E8 20000000</span>
<span class="a " style="left:512px;top:169.5px;"><i class="jm">call</i> <i class="jt">&lt;crackme.sub_4013C2&gt;</i></span>
<span class="a uc" style="left:831px;top:169.5px;"><i class="cj13">关键</i>call</span>
<div class="a" style="left:223.3px;top:185.1px;width:8px;height:8px;border-radius:4px;background:#454545"></div>
<span class="a ad" style="left:240.5px;top:182.5px;">004013A2</span>
<span class="a dot" style="left:317px;top:182.5px;">.</span>
<span class="a by" style="left:341px;top:182.5px;">81F7 78560000</span>
<span class="a " style="left:512px;top:182.5px;"><i class="mn">xor</i> <i class="rg">edi</i><i class="wh">,</i><i class="nm">5678</i></span>
<div class="a" style="left:223.3px;top:198.1px;width:8px;height:8px;border-radius:4px;background:#454545"></div>
<span class="a ad" style="left:240.5px;top:195.5px;">004013A8</span>
<span class="a dot" style="left:317px;top:195.5px;">.</span>
<span class="a by" style="left:341px;top:195.5px;">8BC7</span>
<span class="a " style="left:512px;top:195.5px;"><i class="mn">mov</i> <i class="rg">eax</i><i class="wh">,</i><i class="rg">edi</i></span>
<div class="a" style="left:223.3px;top:211.1px;width:8px;height:8px;border-radius:4px;background:#454545"></div>
<span class="a ad" style="left:240.5px;top:208.5px;">004013AA</span>
<span class="a dot" style="left:317px;top:208.5px;">.</span>
<svg class="a" style="left:325.5px;top:213.5px" width="6" height="4"><path d="M0 0L5.6 0L2.8 3.4z" fill="#c2213c"/></svg>
<span class="a by" style="left:341px;top:208.5px;">EB 15</span>
<span class="a " style="left:512px;top:208.5px;"><i class="jm">jmp</i> <i class="jt">crackme.4013C1</i></span>
<div class="a" style="left:223.3px;top:224.1px;width:8px;height:8px;border-radius:4px;background:#454545"></div>
<span class="a ad" style="left:240.5px;top:221.5px;">004013AC</span>
<span class="a dot" style="left:317px;top:221.5px;">.</span>
<span class="a by" style="left:341px;top:221.5px;">5E</span>
<span class="a " style="left:512px;top:221.5px;"><i class="mn">pop</i> <i class="rg">esi</i></span>
<span class="a cm" style="left:831px;top:221.5px;">esi:"junk"</span>
<div class="a" style="left:223.3px;top:237.1px;width:8px;height:8px;border-radius:4px;background:#454545"></div>
<span class="a ad" style="left:240.5px;top:234.5px;">004013AD</span>
<span class="a dot" style="left:317px;top:234.5px;">.</span>
<span class="a by" style="left:341px;top:234.5px;">6A 30</span>
<span class="a " style="left:512px;top:234.5px;"><i class="mn">push</i> <i class="nm">30</i></span>
<div class="a" style="left:223.3px;top:250.1px;width:8px;height:8px;border-radius:4px;background:#454545"></div>
<span class="a ad" style="left:240.5px;top:247.5px;">004013AF</span>
<span class="a dot" style="left:317px;top:247.5px;">.</span>
<span class="a by" style="left:341px;top:247.5px;">68 <u style="text-decoration:underline;text-decoration-color:#f2837a;text-decoration-thickness:1px;text-underline-offset:1.5px">60214000</u></span>
<span class="a " style="left:512px;top:247.5px;"><i class="mn">push</i> <i class="nm">crackme.402160</i></span>
<span class="a cm" style="left:831px;top:247.5px;">402160:"No luck!"</span>
<div class="a" style="left:223.3px;top:263.1px;width:8px;height:8px;border-radius:4px;background:#454545"></div>
<span class="a ad" style="left:240.5px;top:260.5px;">004013B4</span>
<span class="a dot" style="left:317px;top:260.5px;">.</span>
<span class="a by" style="left:341px;top:260.5px;">68 <u style="text-decoration:underline;text-decoration-color:#f2837a;text-decoration-thickness:1px;text-underline-offset:1.5px">69214000</u></span>
<span class="a " style="left:512px;top:260.5px;"><i class="mn">push</i> <i class="nm">crackme.402169</i></span>
<span class="a cm" style="left:831px;top:260.5px;">402169:"No luck there, mate!"</span>
<div class="a" style="left:223.3px;top:276.1px;width:8px;height:8px;border-radius:4px;background:#454545"></div>
<span class="a ad" style="left:240.5px;top:273.5px;">004013B9</span>
<span class="a dot" style="left:317px;top:273.5px;">.</span>
<span class="a by" style="left:341px;top:273.5px;">FF75 08</span>
<span class="a " style="left:512px;top:273.5px;"><i class="mn">push</i> <i class="wh">dword ptr</i> <i class="rg">ss</i><i class="wh">:</i><i class="wh">[</i><i class="rg">ebp</i><i class="rg">+</i><i class="nm">8</i><i class="wh">]</i></span>
<div class="a" style="left:223.3px;top:289.1px;width:8px;height:8px;border-radius:4px;background:#454545"></div>
<span class="a ad" style="left:240.5px;top:286.5px;">004013BC</span>
<span class="a dot" style="left:317px;top:286.5px;">.</span>
<span class="a by" style="left:341px;top:286.5px;">E8 79000000</span>
<span class="a " style="left:512px;top:286.5px;"><i class="jm">call</i> <i class="jt">&lt;JMP.&amp;MessageBoxA&gt;</i></span>
<div class="a" style="left:223.3px;top:302.1px;width:8px;height:8px;border-radius:4px;background:#454545"></div>
<span class="a ad" style="left:240.5px;top:299.5px;">004013C1</span>
<span class="a dot" style="left:317px;top:299.5px;">.</span>
<span class="a by" style="left:341px;top:299.5px;">C3</span>
<span class="a " style="left:512px;top:299.5px;"><i class="rt">ret</i></span>
<div class="a" style="left:223.3px;top:315.1px;width:8px;height:8px;border-radius:4px;background:#454545"></div>
<span class="a lb" style="left:240.5px;top:312.5px;">004013C2</span>
<span class="a dot" style="left:317px;top:312.5px;">.</span>
<span class="a by" style="left:341px;top:312.5px;">33FF</span>
<span class="a " style="left:512px;top:312.5px;"><i class="mn">xor</i> <i class="rg">edi</i><i class="wh">,</i><i class="rg">edi</i></span>
<span class="a lb" style="left:831px;top:312.5px;">sub_4013C2</span>
<div class="a" style="left:223.3px;top:328.1px;width:8px;height:8px;border-radius:4px;background:#454545"></div>
<span class="a ad" style="left:240.5px;top:325.5px;">004013C4</span>
<span class="a dot" style="left:317px;top:325.5px;">.</span>
<span class="a by" style="left:341px;top:325.5px;">33DB</span>
<span class="a " style="left:512px;top:325.5px;"><i class="mn">xor</i> <i class="rg">ebx</i><i class="wh">,</i><i class="rg">ebx</i></span>
<span class="a cm" style="left:831px;top:325.5px;">ebx:L"è"</span>
<div class="a" style="left:223.3px;top:341.1px;width:8px;height:8px;border-radius:4px;background:#454545"></div>
<span class="a ad" style="left:240.5px;top:338.5px;">004013C6</span>
<span class="a dot" style="left:317px;top:338.5px;">.</span>
<span class="a by" style="left:341px;top:338.5px;">8A1E</span>
<span class="a " style="left:512px;top:338.5px;"><i class="mn">mov</i> <i class="rg">bl</i><i class="wh">,</i><i class="wh">byte ptr</i> <i class="rg">ds</i><i class="wh">:</i><i class="wh">[</i><i class="rg">esi</i><i class="wh">]</i></span>
<span class="a cm" style="left:831px;top:338.5px;">esi:"junk"</span>
<div class="a" style="left:223.3px;top:354.1px;width:8px;height:8px;border-radius:4px;background:#454545"></div>
<span class="a ad" style="left:240.5px;top:351.5px;">004013C8</span>
<span class="a dot" style="left:317px;top:351.5px;">.</span>
<span class="a by" style="left:341px;top:351.5px;">84DB</span>
<span class="a " style="left:512px;top:351.5px;"><i class="mn">test</i> <i class="rg">bl</i><i class="wh">,</i><i class="rg">bl</i></span>
<div class="a" style="left:223.3px;top:367.1px;width:8px;height:8px;border-radius:4px;background:#454545"></div>
<span class="a ad" style="left:240.5px;top:364.5px;">004013CA</span>
<span class="a dot" style="left:317px;top:364.5px;">.</span>
<svg class="a" style="left:325.5px;top:369.5px" width="6" height="4"><path d="M0 0L5.6 0L2.8 3.4z" fill="#c2213c"/></svg>
<span class="a by" style="left:341px;top:364.5px;">74 05</span>
<span class="a " style="left:512px;top:364.5px;"><i class="jm">je</i> <i class="jt">crackme.4013D1</i></span>
<div class="a" style="left:223.3px;top:380.1px;width:8px;height:8px;border-radius:4px;background:#454545"></div>
<span class="a ad" style="left:240.5px;top:377.5px;">004013CC</span>
<span class="a dot" style="left:317px;top:377.5px;">.</span>
<span class="a by" style="left:341px;top:377.5px;">03FB</span>
<span class="a " style="left:512px;top:377.5px;"><i class="mn">add</i> <i class="rg">edi</i><i class="wh">,</i><i class="rg">ebx</i></span>
<span class="a cm" style="left:831px;top:377.5px;">ebx:L"è"</span>
<div class="a" style="left:223.3px;top:393.1px;width:8px;height:8px;border-radius:4px;background:#454545"></div>
<span class="a ad" style="left:240.5px;top:390.5px;">004013CE</span>
<span class="a dot" style="left:317px;top:390.5px;">.</span>
<span class="a by" style="left:341px;top:390.5px;">46</span>
<span class="a " style="left:512px;top:390.5px;"><i class="mn">inc</i> <i class="rg">esi</i></span>
<span class="a cm" style="left:831px;top:390.5px;">esi:"junk"</span>
<div class="a" style="left:223.3px;top:406.1px;width:8px;height:8px;border-radius:4px;background:#454545"></div>
<span class="a ad" style="left:240.5px;top:403.5px;">004013CF</span>
<span class="a dot" style="left:317px;top:403.5px;">.</span>
<svg class="a" style="left:325.5px;top:408.5px" width="6" height="4"><path d="M0 3.4L5.6 3.4L2.8 0z" fill="#c2213c"/></svg>
<span class="a by" style="left:341px;top:403.5px;">EB F5</span>
<span class="a " style="left:512px;top:403.5px;"><i class="jm">jmp</i> <i class="jt">crackme.4013C6</i></span>
<div class="a" style="left:223.3px;top:419.1px;width:8px;height:8px;border-radius:4px;background:#454545"></div>
<span class="a ad" style="left:240.5px;top:416.5px;">004013D1</span>
<span class="a dot" style="left:317px;top:416.5px;">.</span>
<span class="a by" style="left:341px;top:416.5px;">C3</span>
<span class="a " style="left:512px;top:416.5px;"><i class="rt">ret</i></span>
<div class="a" style="left:223.3px;top:432.1px;width:8px;height:8px;border-radius:4px;background:#454545"></div>
<span class="a lb" style="left:240.5px;top:429.5px;">004013D2</span>
<span class="a dot" style="left:317px;top:429.5px;">.</span>
<span class="a by" style="left:341px;top:429.5px;">2C 20</span>
<span class="a " style="left:512px;top:429.5px;"><i class="mn">sub</i> <i class="rg">al</i><i class="wh">,</i><i class="nm">20</i></span>
<span class="a lb" style="left:831px;top:429.5px;">sub_4013D2</span>
<div class="a" style="left:223.3px;top:445.1px;width:8px;height:8px;border-radius:4px;background:#454545"></div>
<span class="a ad" style="left:240.5px;top:442.5px;">004013D4</span>
<span class="a dot" style="left:317px;top:442.5px;">.</span>
<span class="a by" style="left:341px;top:442.5px;">8806</span>
<span class="a " style="left:512px;top:442.5px;"><i class="mn">mov</i> <i class="wh">byte ptr</i> <i class="rg">ds</i><i class="wh">:</i><i class="wh">[</i><i class="rg">esi</i><i class="wh">]</i><i class="wh">,</i><i class="rg">al</i></span>
<span class="a cm" style="left:831px;top:442.5px;">esi:"junk"</span>
<div class="a" style="left:223.3px;top:458.1px;width:8px;height:8px;border-radius:4px;background:#454545"></div>
<span class="a ad" style="left:240.5px;top:455.5px;">004013D6</span>
<span class="a dot" style="left:317px;top:455.5px;">.</span>
<span class="a by" style="left:341px;top:455.5px;">C3</span>
<span class="a " style="left:512px;top:455.5px;"><i class="rt">ret</i></span>
<div class="a" style="left:223.3px;top:471.1px;width:8px;height:8px;border-radius:4px;background:#454545"></div>
<span class="a ad" style="left:240.5px;top:468.5px;">004013D7</span>
<span class="a by" style="left:341px;top:468.5px;">C3</span>
<span class="a " style="left:512px;top:468.5px;"><i class="rt">ret</i></span>
<div class="a" style="left:223.3px;top:484.1px;width:8px;height:8px;border-radius:4px;background:#454545"></div>
<span class="a lb" style="left:240.5px;top:481.5px;">004013D8</span>
<span class="a dot" style="left:317px;top:481.5px;">.</span>
<span class="a by" style="left:341px;top:481.5px;">33C0</span>
<span class="a " style="left:512px;top:481.5px;"><i class="mn">xor</i> <i class="rg">eax</i><i class="wh">,</i><i class="rg">eax</i></span>
<span class="a lb" style="left:831px;top:481.5px;">sub_4013D8</span>
<div class="a" style="left:223.3px;top:497.1px;width:8px;height:8px;border-radius:4px;background:#454545"></div>
<span class="a ad" style="left:240.5px;top:494.5px;">004013DA</span>
<span class="a dot" style="left:317px;top:494.5px;">.</span>
<span class="a by" style="left:341px;top:494.5px;">33FF</span>
<span class="a " style="left:512px;top:494.5px;"><i class="mn">xor</i> <i class="rg">edi</i><i class="wh">,</i><i class="rg">edi</i></span>
<div class="a" style="left:223.3px;top:510.1px;width:8px;height:8px;border-radius:4px;background:#454545"></div>
<span class="a ad" style="left:240.5px;top:507.5px;">004013DC</span>
<span class="a dot" style="left:317px;top:507.5px;">.</span>
<span class="a by" style="left:341px;top:507.5px;">33DB</span>
<span class="a " style="left:512px;top:507.5px;"><i class="mn">xor</i> <i class="rg">ebx</i><i class="wh">,</i><i class="rg">ebx</i></span>
<span class="a cm" style="left:831px;top:507.5px;">ebx:L"è"</span>
<div class="a" style="left:223.3px;top:523.1px;width:8px;height:8px;border-radius:4px;background:#454545"></div>
<span class="a ad" style="left:240.5px;top:520.5px;">004013DE</span>
<span class="a dot" style="left:317px;top:520.5px;">.</span>
<span class="a by" style="left:341px;top:520.5px;">8B7424 04</span>
<span class="a " style="left:512px;top:520.5px;"><i class="mn">mov</i> <i class="rg">esi</i><i class="wh">,</i><i class="wh">dword ptr</i> <i class="rg">ss</i><i class="wh">:</i><i class="wh">[</i><i class="rg">esp</i><i class="rg">+</i><i class="nm">4</i><i class="wh">]</i></span>
<span class="a cm" style="left:831px;top:520.5px;">[esp+4]:"Ph~!@"</span>
<div class="a" style="left:223.3px;top:536.1px;width:8px;height:8px;border-radius:4px;background:#454545"></div>
<span class="a ad" style="left:240.5px;top:533.5px;">004013E2</span>
<span class="a dot" style="left:317px;top:533.5px;">.</span>
<span class="a by" style="left:341px;top:533.5px;">B0 0A</span>
<span class="a " style="left:512px;top:533.5px;"><i class="mn">mov</i> <i class="rg">al</i><i class="wh">,</i><i class="nm">A</i></span>
<span class="a cm" style="left:831px;top:533.5px;">A:'\n'</span>
<div class="a" style="left:201px;top:313.0px;width:14px;height:14px;border:1px solid #dadada;background:#2b2b2b"></div><div class="a" style="left:204.5px;top:319.5px;width:7px;height:1px;background:#e8e8e8"></div>
<div class="a" style="left:201px;top:430.0px;width:14px;height:14px;border:1px solid #dadada;background:#2b2b2b"></div><div class="a" style="left:204.5px;top:436.5px;width:7px;height:1px;background:#e8e8e8"></div>
<div class="a" style="left:201px;top:482.0px;width:14px;height:14px;border:1px solid #dadada;background:#2b2b2b"></div><div class="a" style="left:204.5px;top:488.5px;width:7px;height:1px;background:#e8e8e8"></div>
<svg class="a" style="left:0;top:0" width="234" height="538" fill="none" stroke="#909090" stroke-width="1"><path d="M222 150.5H161.5V7.5H222"/><path d="M218.5 4.0L222 7.5L218.5 11.0" stroke="#909090"/><path d="M222 111.5H183.5V7.5"/><path d="M222 33.5H172.5V163.5H222" stroke-dasharray="4 2"/><path d="M218.5 160.0L222 163.5L218.5 167.0" stroke="#909090"/><path d="M222 59.5H150.5V228.5H222" stroke-dasharray="4 2"/><path d="M218.5 225.0L222 228.5L218.5 232.0" stroke="#909090"/><path d="M222 85.5H194.5V124.5H218" stroke="#d4d4d4" stroke-width="2" stroke-dasharray="9 3"/><path d="M216 120.5L221 124.5L216 128.5" stroke="#d4d4d4" stroke-width="2"/><path d="M27 124.5H194" stroke="#6a6a6a" stroke-width="1.4"/><path d="M189 120.5L194 124.5L189 128.5" stroke="#6a6a6a" stroke-width="1.4"/><path d="M222 215.5H194.5V306.5H222"/><path d="M218.5 303.0L222 306.5L218.5 310.0" stroke="#909090"/><path d="M222 410.5H183.5V345.5H222"/><path d="M218.5 342.0L222 345.5L218.5 349.0" stroke="#909090"/><path d="M222 371.5H194.5V423.5H222" stroke-dasharray="4 2"/><path d="M218.5 420.0L222 423.5L218.5 427.0" stroke="#909090"/></svg>
<span class="a" style="left:3px;top:117.5px;width:25px;background:#3d3d3d;color:#8fea4d;padding-left:1px">EIP</span>
</div>
<div class="a" style="left:223.3px;top:638.1px;width:8px;height:8px;background:#454545;border-radius:4px"></div>
<div class="a" style="left:234px;top:640px;width:1px;height:19px;background:#4a4a4a;"></div>
<div class="a" style="left:234px;top:217px;width:681px;height:17px;border:2px solid #e3212b"></div>
<svg class="a" style="left:1726px;top:107px" width="8" height="6.8"><path d="M0 6.8L4.0 0L8 6.8z" fill="#9a9a9a"/></svg>
<svg class="a" style="left:1726px;top:629px" width="8" height="6.8"><path d="M0 0L8 0L4.0 6.8z" fill="#9a9a9a"/></svg>
<div class="sbt" style="left:1725px;top:119px;width:10px;height:505px"></div><div class="sb" style="left:1725px;top:218px;width:10px;height:58px"></div>
<svg class="a" style="left:240px;top:645px" width="6.8" height="8"><path d="M6.8 0L0 4.0L6.8 8z" fill="#9a9a9a"/></svg>
<svg class="a" style="left:1710px;top:645px" width="6.8" height="8"><path d="M0 0L6.8 4.0L0 8z" fill="#9a9a9a"/></svg>
<div class="sbt" style="left:252px;top:644px;width:1453px;height:10px"></div><div class="sb" style="left:252px;top:644px;width:1246px;height:10px"></div>
<div class="a" style="left:0px;top:659px;width:1741px;height:1px;background:#474747;"></div>
<div class="a" style="left:1740px;top:102px;width:1px;height:616px;background:#474747;"></div>
<span class="a wh" style="left:6px;top:660.5px;">&lt;crackme.sub_4013D2&gt;</span>
<span class="a wh" style="left:6px;top:699.5px;">CODE:00401394 crackme.exe:$1394 #994 &lt;sub_40137E+16&gt;</span>
<div class="a" style="left:0px;top:718px;width:1550px;height:1px;background:#474747;"></div>
<div class="a" style="left:1741px;top:102px;width:819px;height:26px;border:1px solid #323232;border-radius:2px;background:#222222"></div>
<span class="a by" style="left:2125px;top:109px;line-height:14px"><i class="cj13" style="font-size:12.5px;color:#f4f4f4">隐藏</i>FPU</span>
<span class="a rg" style="left:1750px;top:134px;line-height:14px">EAX</span>
<span class="a by" style="left:1798px;top:134px;line-height:14px">0000006A</span>
<span class="a pk" style="left:1902px;top:134px;line-height:14px">'j'</span>
<div class="a" style="left:1750px;top:145px;width:24px;height:2px;background:#eeee8c;"></div>
<span class="a rg" style="left:1750px;top:148px;line-height:14px">EBX</span>
<span class="a by" style="left:1798px;top:148px;line-height:14px">00401128</span>
<span class="a pk" style="left:1902px;top:148px;line-height:14px">L"è"</span>
<span class="a rg" style="left:1750px;top:162px;line-height:14px">ECX</span>
<span class="a by" style="left:1798px;top:162px;line-height:14px">76E80170</span>
<span class="a pk" style="left:1902px;top:162px;line-height:14px">&lt;user32.sub_76E80170&gt;</span>
<div class="a" style="left:1750px;top:173px;width:24px;height:2px;background:#eeee8c;"></div>
<span class="a rg" style="left:1750px;top:176px;line-height:14px">EDX</span>
<span class="a by" style="left:1798px;top:176px;line-height:14px">00000000</span>
<div class="a" style="left:1750px;top:187px;width:24px;height:2px;background:#eeee8c;"></div>
<span class="a rg" style="left:1750px;top:190px;line-height:14px">EBP</span>
<span class="a by" style="left:1798px;top:190px;line-height:14px">0019FDDC</span>
<span class="a rg" style="left:1750px;top:204px;line-height:14px">ESP</span>
<span class="a by" style="left:1798px;top:204px;line-height:14px">0019FDC4</span>
<span class="a pk" style="left:1902px;top:204px;line-height:14px">&amp;"junk"</span>
<div class="a" style="left:1750px;top:215px;width:24px;height:2px;background:#e8434d;"></div>
<div class="a" style="left:1797px;top:219px;width:66px;height:13px;background:#414141;"></div>
<span class="a rg" style="left:1750px;top:218px;line-height:14px">ESI</span>
<span class="a by" style="left:1798px;top:218px;line-height:14px">0040218E</span>
<span class="a pk" style="left:1902px;top:218px;line-height:14px">"junk"</span>
<span class="a rg" style="left:1750px;top:232px;line-height:14px">EDI</span>
<span class="a by" style="left:1798px;top:232px;line-height:14px">00000111</span>
<span class="a pk" style="left:1902px;top:232px;line-height:14px">L'đ'</span>
<span class="a rg" style="left:1750px;top:260px;line-height:14px">EIP</span>
<span class="a jt" style="left:1798px;top:260px;line-height:14px">00401394</span>
<span class="a pk" style="left:1902px;top:260px;line-height:14px">crackme.00401394</span>
<span class="a rg" style="left:1750px;top:288px;line-height:14px">EFLAGS</span>
<span class="a by" style="left:1822px;top:288px;line-height:14px">00000202</span>
<span class="a rg" style="left:1750px;top:302px;line-height:14px">ZF</span>
<span class="a by" style="left:1774px;top:302px;line-height:14px">0</span>
<span class="a rg" style="left:1798px;top:302px;line-height:14px">PF</span>
<span class="a by" style="left:1822px;top:302px;line-height:14px">0</span>
<span class="a rg" style="left:1846px;top:302px;line-height:14px">AF</span>
<span class="a by" style="left:1870px;top:302px;line-height:14px">0</span>
<span class="a rg" style="left:1750px;top:316px;line-height:14px">OF</span>
<span class="a by" style="left:1774px;top:316px;line-height:14px">0</span>
<span class="a rg" style="left:1798px;top:316px;line-height:14px">SF</span>
<span class="a by" style="left:1822px;top:316px;line-height:14px">0</span>
<span class="a rg" style="left:1846px;top:316px;line-height:14px">DF</span>
<span class="a by" style="left:1870px;top:316px;line-height:14px">0</span>
<span class="a rg" style="left:1750px;top:330px;line-height:14px">CF</span>
<span class="a by" style="left:1774px;top:330px;line-height:14px">0</span>
<span class="a rg" style="left:1798px;top:330px;line-height:14px">TF</span>
<span class="a by" style="left:1822px;top:330px;line-height:14px">0</span>
<span class="a rg" style="left:1846px;top:330px;line-height:14px">IF</span>
<span class="a by" style="left:1870px;top:330px;line-height:14px">1</span>
<span class="a rg" style="left:1750px;top:358px;line-height:14px">LastError</span>
<span class="a by" style="left:1838px;top:358px;line-height:14px">00000000 (ERROR_SUCCESS)</span>
<span class="a rg" style="left:1750px;top:372px;line-height:14px">LastStatus</span>
<span class="a by" style="left:1838px;top:372px;line-height:14px">C0000034 (STATUS_OBJECT_NAME_NOT_FOUND)</span>
<span class="a rg" style="left:1750px;top:400px;line-height:14px">GS</span>
<span class="a by" style="left:1774px;top:400px;line-height:14px">002B</span>
<span class="a rg" style="left:1822px;top:400px;line-height:14px">FS</span>
<span class="a by" style="left:1846px;top:400px;line-height:14px">0053</span>
<span class="a rg" style="left:1750px;top:414px;line-height:14px">ES</span>
<span class="a by" style="left:1774px;top:414px;line-height:14px">002B</span>
<span class="a rg" style="left:1822px;top:414px;line-height:14px">DS</span>
<span class="a by" style="left:1846px;top:414px;line-height:14px">002B</span>
<span class="a rg" style="left:1750px;top:428px;line-height:14px">CS</span>
<span class="a by" style="left:1774px;top:428px;line-height:14px">0023</span>
<span class="a rg" style="left:1822px;top:428px;line-height:14px">SS</span>
<span class="a by" style="left:1846px;top:428px;line-height:14px">002B</span>
<div class="a" style="left:1822px;top:439px;width:16px;height:2px;background:#8fea4d;"></div>
<span class="a rg" style="left:1750px;top:456px;line-height:14px">ST(0)</span>
<span class="a by" style="left:1798px;top:456px;line-height:14px">00000000000000000000</span>
<span class="a pk" style="left:1966px;top:456px;line-height:14px">x87r0</span>
<span class="a pk" style="left:2014px;top:456px;line-height:14px"><i class="cj13">空</i></span>
<span class="a pk" style="left:2035px;top:456px;line-height:14px">0.000000000000000000</span>
<span class="a rg" style="left:1750px;top:470px;line-height:14px">ST(1)</span>
<span class="a by" style="left:1798px;top:470px;line-height:14px">00000000000000000000</span>
<span class="a pk" style="left:1966px;top:470px;line-height:14px">x87r1</span>
<span class="a pk" style="left:2014px;top:470px;line-height:14px"><i class="cj13">空</i></span>
<span class="a pk" style="left:2035px;top:470px;line-height:14px">0.000000000000000000</span>
<span class="a rg" style="left:1750px;top:484px;line-height:14px">ST(2)</span>
<span class="a by" style="left:1798px;top:484px;line-height:14px">00000000000000000000</span>
<span class="a pk" style="left:1966px;top:484px;line-height:14px">x87r2</span>
<span class="a pk" style="left:2014px;top:484px;line-height:14px"><i class="cj13">空</i></span>
<span class="a pk" style="left:2035px;top:484px;line-height:14px">0.000000000000000000</span>
<span class="a rg" style="left:1750px;top:498px;line-height:14px">ST(3)</span>
<span class="a by" style="left:1798px;top:498px;line-height:14px">00000000000000000000</span>
<span class="a pk" style="left:1966px;top:498px;line-height:14px">x87r3</span>
<span class="a pk" style="left:2014px;top:498px;line-height:14px"><i class="cj13">空</i></span>
<span class="a pk" style="left:2035px;top:498px;line-height:14px">0.000000000000000000</span>
<span class="a rg" style="left:1750px;top:512px;line-height:14px">ST(4)</span>
<span class="a by" style="left:1798px;top:512px;line-height:14px">3FFF8000000000000000</span>
<span class="a pk" style="left:1966px;top:512px;line-height:14px">x87r4</span>
<span class="a pk" style="left:2014px;top:512px;line-height:14px"><i class="cj13">空</i></span>
<span class="a pk" style="left:2035px;top:512px;line-height:14px">1.000000000000000000</span>
<span class="a rg" style="left:1750px;top:526px;line-height:14px">ST(5)</span>
<span class="a by" style="left:1798px;top:526px;line-height:14px">3FFE8000000000000000</span>
<span class="a pk" style="left:1966px;top:526px;line-height:14px">x87r5</span>
<span class="a pk" style="left:2014px;top:526px;line-height:14px"><i class="cj13">空</i></span>
<span class="a pk" style="left:2035px;top:526px;line-height:14px">0.5000000000000000000</span>
<span class="a rg" style="left:1750px;top:540px;line-height:14px">ST(6)</span>
<span class="a by" style="left:1798px;top:540px;line-height:14px">3FFF8000000000000000</span>
<span class="a pk" style="left:1966px;top:540px;line-height:14px">x87r6</span>
<span class="a pk" style="left:2014px;top:540px;line-height:14px"><i class="cj13">空</i></span>
<span class="a pk" style="left:2035px;top:540px;line-height:14px">1.000000000000000000</span>
<span class="a rg" style="left:1750px;top:554px;line-height:14px">ST(7)</span>
<span class="a by" style="left:1798px;top:554px;line-height:14px">00000000000000000000</span>
<span class="a pk" style="left:1966px;top:554px;line-height:14px">x87r7</span>
<span class="a pk" style="left:2014px;top:554px;line-height:14px"><i class="cj13">空</i></span>
<span class="a pk" style="left:2035px;top:554px;line-height:14px">0.000000000000000000</span>
<svg class="a" style="left:2546px;top:132px" width="8" height="6.8"><path d="M0 6.8L4.0 0L8 6.8z" fill="#9a9a9a"/></svg>
<svg class="a" style="left:2546px;top:563px" width="8" height="6.8"><path d="M0 0L8 0L4.0 6.8z" fill="#9a9a9a"/></svg>
<div class="sbt" style="left:2545px;top:144px;width:10px;height:414px"></div><div class="sb" style="left:2545px;top:144px;width:10px;height:161px"></div>
<svg class="a" style="left:1746px;top:580px" width="6.8" height="8"><path d="M6.8 0L0 4.0L6.8 8z" fill="#9a9a9a"/></svg>
<svg class="a" style="left:2529px;top:580px" width="6.8" height="8"><path d="M0 0L6.8 4.0L0 8z" fill="#9a9a9a"/></svg>
<div class="sbt" style="left:1757px;top:579px;width:768px;height:10px"></div><div class="sb" style="left:1757px;top:579px;width:614px;height:10px"></div>
<div class="a" style="left:1741px;top:593px;width:819px;height:1px;background:#474747;"></div>
<span class="a ui" style="left:1746px;top:603px;">默认<b style="width:60px"><i> (stdcall)</i></b></span>
<svg class="a" style="left:2372.5px;top:606px" width="9" height="4.5"><path d="M0 0L9 0L4.5 4.5z" fill="#9a9a9a"/></svg>
<div class="a" style="left:2389px;top:596px;width:101px;height:25px;background:#323232;"></div>
<svg class="a" style="left:2393px;top:606px" width="8" height="4.5"><path d="M0 0L8 0L4.0 4.5z" fill="#9a9a9a"/></svg>
<span class="a " style="left:2411.5px;top:602px;font-family:'Liberation Sans',sans-serif;font-size:11.5px;line-height:14px;color:#f2f2f2">5</span>
<svg class="a" style="left:2478px;top:605.5px" width="8" height="4.5"><path d="M0 4.5L4.0 0L8 4.5z" fill="#9a9a9a"/></svg>
<div class="a" style="left:2494.5px;top:599.5px;width:15px;height:15px;border:1.5px solid #777;border-radius:3px"></div>
<span class="a ui" style="left:2516px;top:602px;">解锁</span>
<div class="a" style="left:1742px;top:649px;width:798px;height:13px;background:#3c3c3c;"></div>
<span class="a by" style="left:1746px;top:622.7px;">1: [esp] 0040218E "junk"</span>
<span class="a by" style="left:1746px;top:635.7px;">2: [esp+4] 00401232 "Ph~!@"</span>
<span class="a by" style="left:1746px;top:648.7px;">3: [esp+8] 0040218E "junk"</span>
<span class="a by" style="left:1746px;top:661.7px;">4: [esp+C] 00401128 &lt;crackme.WndProc&gt;</span>
<span class="a by" style="left:1746px;top:674.7px;">5: [esp+10] 00000111</span>
<svg class="a" style="left:2546px;top:628px" width="8" height="6.8"><path d="M0 6.8L4.0 0L8 6.8z" fill="#9a9a9a"/></svg>
<svg class="a" style="left:2546px;top:706px" width="8" height="6.8"><path d="M0 0L8 0L4.0 6.8z" fill="#9a9a9a"/></svg>
<div class="sb" style="left:2545px;top:638px;width:10px;height:64px"></div>
<div class="a" style="left:1550px;top:718px;width:1010px;height:1px;background:#474747;"></div>
<div class="tab act" style="left:2px;top:720px;width:88px"><svg width="16" height="16" viewBox="0 0 16 16"><g transform="translate(8 0) scale(.86 1) translate(-8 0)" stroke="#7a3f14" stroke-width=".6">
<circle cx="8" cy="3.6" r="3.1" fill="#b96a2c"/>
<path d="M1 6.3c2-.6 4-.4 5 .1h4c1-.5 3-.7 5-.1l-.3 2.4c-1.6.3-2.8.3-3.7 0l.4 2.4 2.2 2.6-.6 1.9h-3.2L8 12.6 6.2 15.6H3l-.6-1.9 2.2-2.6.4-2.4c-.9.3-2.1.3-3.7 0z" fill="#b96a2c"/>
<g stroke="none"><ellipse cx="8" cy="3.2" rx="2.2" ry="1.9" fill="#dc9650" opacity=".75"/>
<circle cx="6.9" cy="3.1" r=".55" fill="#5a2d0c"/><circle cx="9.1" cy="3.1" r=".55" fill="#5a2d0c"/>
<circle cx="8" cy="8" r=".6" fill="#fff3d6"/><circle cx="8" cy="10" r=".6" fill="#fff3d6"/></g>
<path d="M6.6 4.5q1.4 1 2.8 0" stroke="#5a2d0c" stroke-width=".6" fill="none"/>
<g stroke="none"><path d="M2.6 7.4l1 .9M13.4 7.4l-1 .9M4.4 14.4h2M9.6 14.4h2" stroke="#fff" stroke-width="1.1" fill="none"/></g></g></svg><span class="tx">内存<b style="width:12px"><i> 1</i></b></span></div>
<div class="tab" style="left:92px;top:720px;width:88px"><svg width="16" height="16" viewBox="0 0 16 16"><g transform="translate(8 0) scale(.86 1) translate(-8 0)" stroke="#7a3f14" stroke-width=".6">
<circle cx="8" cy="3.6" r="3.1" fill="#b96a2c"/>
<path d="M1 6.3c2-.6 4-.4 5 .1h4c1-.5 3-.7 5-.1l-.3 2.4c-1.6.3-2.8.3-3.7 0l.4 2.4 2.2 2.6-.6 1.9h-3.2L8 12.6 6.2 15.6H3l-.6-1.9 2.2-2.6.4-2.4c-.9.3-2.1.3-3.7 0z" fill="#b96a2c"/>
<g stroke="none"><ellipse cx="8" cy="3.2" rx="2.2" ry="1.9" fill="#dc9650" opacity=".75"/>
<circle cx="6.9" cy="3.1" r=".55" fill="#5a2d0c"/><circle cx="9.1" cy="3.1" r=".55" fill="#5a2d0c"/>
<circle cx="8" cy="8" r=".6" fill="#fff3d6"/><circle cx="8" cy="10" r=".6" fill="#fff3d6"/></g>
<path d="M6.6 4.5q1.4 1 2.8 0" stroke="#5a2d0c" stroke-width=".6" fill="none"/>
<g stroke="none"><path d="M2.6 7.4l1 .9M13.4 7.4l-1 .9M4.4 14.4h2M9.6 14.4h2" stroke="#fff" stroke-width="1.1" fill="none"/></g></g></svg><span class="tx">内存<b style="width:12px"><i> 2</i></b></span></div>
<div class="tab" style="left:182px;top:720px;width:88px"><svg width="16" height="16" viewBox="0 0 16 16"><g transform="translate(8 0) scale(.86 1) translate(-8 0)" stroke="#7a3f14" stroke-width=".6">
<circle cx="8" cy="3.6" r="3.1" fill="#b96a2c"/>
<path d="M1 6.3c2-.6 4-.4 5 .1h4c1-.5 3-.7 5-.1l-.3 2.4c-1.6.3-2.8.3-3.7 0l.4 2.4 2.2 2.6-.6 1.9h-3.2L8 12.6 6.2 15.6H3l-.6-1.9 2.2-2.6.4-2.4c-.9.3-2.1.3-3.7 0z" fill="#b96a2c"/>
<g stroke="none"><ellipse cx="8" cy="3.2" rx="2.2" ry="1.9" fill="#dc9650" opacity=".75"/>
<circle cx="6.9" cy="3.1" r=".55" fill="#5a2d0c"/><circle cx="9.1" cy="3.1" r=".55" fill="#5a2d0c"/>
<circle cx="8" cy="8" r=".6" fill="#fff3d6"/><circle cx="8" cy="10" r=".6" fill="#fff3d6"/></g>
<path d="M6.6 4.5q1.4 1 2.8 0" stroke="#5a2d0c" stroke-width=".6" fill="none"/>
<g stroke="none"><path d="M2.6 7.4l1 .9M13.4 7.4l-1 .9M4.4 14.4h2M9.6 14.4h2" stroke="#fff" stroke-width="1.1" fill="none"/></g></g></svg><span class="tx">内存<b style="width:12px"><i> 3</i></b></span></div>
<div class="tab" style="left:272px;top:720px;width:88px"><svg width="16" height="16" viewBox="0 0 16 16"><g transform="translate(8 0) scale(.86 1) translate(-8 0)" stroke="#7a3f14" stroke-width=".6">
<circle cx="8" cy="3.6" r="3.1" fill="#b96a2c"/>
<path d="M1 6.3c2-.6 4-.4 5 .1h4c1-.5 3-.7 5-.1l-.3 2.4c-1.6.3-2.8.3-3.7 0l.4 2.4 2.2 2.6-.6 1.9h-3.2L8 12.6 6.2 15.6H3l-.6-1.9 2.2-2.6.4-2.4c-.9.3-2.1.3-3.7 0z" fill="#b96a2c"/>
<g stroke="none"><ellipse cx="8" cy="3.2" rx="2.2" ry="1.9" fill="#dc9650" opacity=".75"/>
<circle cx="6.9" cy="3.1" r=".55" fill="#5a2d0c"/><circle cx="9.1" cy="3.1" r=".55" fill="#5a2d0c"/>
<circle cx="8" cy="8" r=".6" fill="#fff3d6"/><circle cx="8" cy="10" r=".6" fill="#fff3d6"/></g>
<path d="M6.6 4.5q1.4 1 2.8 0" stroke="#5a2d0c" stroke-width=".6" fill="none"/>
<g stroke="none"><path d="M2.6 7.4l1 .9M13.4 7.4l-1 .9M4.4 14.4h2M9.6 14.4h2" stroke="#fff" stroke-width="1.1" fill="none"/></g></g></svg><span class="tx">内存<b style="width:12px"><i> 4</i></b></span></div>
<div class="tab" style="left:362px;top:720px;width:88px"><svg width="16" height="16" viewBox="0 0 16 16"><g transform="translate(8 0) scale(.86 1) translate(-8 0)" stroke="#7a3f14" stroke-width=".6">
<circle cx="8" cy="3.6" r="3.1" fill="#b96a2c"/>
<path d="M1 6.3c2-.6 4-.4 5 .1h4c1-.5 3-.7 5-.1l-.3 2.4c-1.6.3-2.8.3-3.7 0l.4 2.4 2.2 2.6-.6 1.9h-3.2L8 12.6 6.2 15.6H3l-.6-1.9 2.2-2.6.4-2.4c-.9.3-2.1.3-3.7 0z" fill="#b96a2c"/>
<g stroke="none"><ellipse cx="8" cy="3.2" rx="2.2" ry="1.9" fill="#dc9650" opacity=".75"/>
<circle cx="6.9" cy="3.1" r=".55" fill="#5a2d0c"/><circle cx="9.1" cy="3.1" r=".55" fill="#5a2d0c"/>
<circle cx="8" cy="8" r=".6" fill="#fff3d6"/><circle cx="8" cy="10" r=".6" fill="#fff3d6"/></g>
<path d="M6.6 4.5q1.4 1 2.8 0" stroke="#5a2d0c" stroke-width=".6" fill="none"/>
<g stroke="none"><path d="M2.6 7.4l1 .9M13.4 7.4l-1 .9M4.4 14.4h2M9.6 14.4h2" stroke="#fff" stroke-width="1.1" fill="none"/></g></g></svg><span class="tx">内存<b style="width:12px"><i> 5</i></b></span></div>
<div class="tab" style="left:452px;top:720px;width:88px"><svg width="16" height="16" viewBox="0 0 16 16"><path d="M7.6 8.4C5 6.6 3 6.8 1.2 5.8c-.2 2 .4 3.4 1.6 4.4-.6 1-.8 2-.6 3.4 2.2-.4 4.2-2 5.4-5.200z" fill="#36a23a"/>
<path d="M8.400 8.400c2.6-1.800 4.600-1.600 6.400-2.600.2 2-.4 3.400-1.600 4.400.6 1 .8 2 .6 3.400-2.200-.4-4.200-2-5.400-5.200z" fill="#2c8f31"/>
<path d="M8 9c-1.600 2-1.800 4-1 6.400C9.400 14.600 10 12 8 9z" fill="#4dbb50"/>
<circle cx="6.500" cy="5.600" r="2.100" fill="#d92f35"/><circle cx="9.800" cy="5.800" r="2" fill="#c9252b"/><circle cx="8.200" cy="3" r="2" fill="#e9444a"/>
<circle cx="7.700" cy="2.400" r=".6" fill="#fff" opacity=".85"/><circle cx="6" cy="5" r=".5" fill="#fff" opacity=".7"/></svg><span class="tx">监视<b style="width:12px"><i> 1</i></b></span></div>
<div class="tab" style="left:542px;top:720px;width:100px"><svg width="16" height="16" viewBox="0 0 16 16"><g transform="translate(8 0) scale(.86 1) translate(-8 0)" stroke="#7a3f14" stroke-width=".6">
<circle cx="8" cy="3.6" r="3.1" fill="#b96a2c"/>
<path d="M1 6.3c2-.6 4-.4 5 .1h4c1-.5 3-.7 5-.1l-.3 2.4c-1.6.3-2.8.3-3.7 0l.4 2.4 2.2 2.6-.6 1.9h-3.2L8 12.6 6.2 15.6H3l-.6-1.9 2.2-2.6.4-2.4c-.9.3-2.1.3-3.7 0z" fill="#b96a2c"/>
<g stroke="none"><ellipse cx="8" cy="3.2" rx="2.2" ry="1.9" fill="#dc9650" opacity=".75"/>
<circle cx="6.9" cy="3.1" r=".55" fill="#5a2d0c"/><circle cx="9.1" cy="3.1" r=".55" fill="#5a2d0c"/>
<circle cx="8" cy="8" r=".6" fill="#fff3d6"/><circle cx="8" cy="10" r=".6" fill="#fff3d6"/></g>
<path d="M6.6 4.5q1.4 1 2.8 0" stroke="#5a2d0c" stroke-width=".6" fill="none"/>
<g stroke="none"><path d="M2.6 7.4l1 .9M13.4 7.4l-1 .9M4.4 14.4h2M9.6 14.4h2" stroke="#fff" stroke-width="1.1" fill="none"/></g></g></svg><span class="tx">局部变量</span></div>
<div class="tab" style="left:644px;top:720px;width:88px"><svg width="16" height="16" viewBox="0 0 16 16"><path d="M4.2 15L9.6 6.2c1.4-2.2 0-3.6-1.4-3.6-1.2 0-2 .8-2.4 2" stroke="#fafafa" stroke-width="2.6" fill="none" stroke-linecap="round"/>
<path d="M4.2 15L9.6 6.2c1.4-2.2 0-3.6-1.4-3.6-1.2 0-2 .8-2.4 2" stroke="#e3343a" stroke-width="2.6" fill="none" stroke-linecap="butt" stroke-dasharray="2 2"/></svg><span class="tx">结构体</span></div>
<div class="a" style="left:2px;top:748px;width:1526px;height:16px;background:#252525;"></div>
<span class="a ui" style="left:8px;top:751px;">地址</span>
<span class="a ui" style="left:80px;top:751px;">十六进制</span>
<span class="a by" style="left:463px;top:751px;line-height:14px">ASCII</span>
<div class="a" style="left:74px;top:765px;width:1px;height:220px;background:#747474;"></div>
<div class="a" style="left:458px;top:765px;width:1px;height:220px;background:#747474;"></div>
<div class="a" style="left:594px;top:765px;width:1px;height:220px;background:#747474;"></div>
<div class="a" style="left:74px;top:749px;width:1px;height:15px;background:#383838;"></div>
<div class="a" style="left:458px;top:749px;width:1px;height:15px;background:#383838;"></div>
<div class="a" style="left:594px;top:749px;width:1px;height:15px;background:#383838;"></div>
<div class="a" style="left:75px;top:749px;width:1px;height:15px;background:#1c1c1c;"></div>
<div class="a" style="left:459px;top:749px;width:1px;height:15px;background:#1c1c1c;"></div>
<div class="a" style="left:595px;top:749px;width:1px;height:15px;background:#1c1c1c;"></div>
<div class="a" style="left:75px;top:764.5px;width:144px;height:13px;background:#444;"></div>
<div class="a" style="left:463px;top:764.5px;width:48px;height:13px;background:#444;"></div>
<span class="a ad" style="left:7px;top:765.3px;">0040217E</span>
<span class="a by" style="left:80px;top:765.3px;">31 32 33 34 35 36 00 00 00 00 00 00 00 00 00 00</span>
<span class="a by" style="left:463px;top:765.3px;">123456..........</span>
<span class="a ad" style="left:7px;top:778.3px;">0040218E</span>
<span class="a by" style="left:80px;top:778.3px;">6A 75 6E 6B 00 00 00 00 00 00 00 00 00 00 00 00</span>
<span class="a by" style="left:463px;top:778.3px;">junk............</span>
<span class="a ad" style="left:7px;top:791.3px;">0040219E</span>
<span class="a by" style="left:80px;top:791.3px;">00 00 00 00 00 00 00 00 00 00 00 00 00 00 00 00</span>
<span class="a by" style="left:463px;top:791.3px;">................</span>
<span class="a ad" style="left:7px;top:804.3px;">004021AE</span>
<span class="a by" style="left:80px;top:804.3px;">00 00 00 00 00 00 00 00 00 00 00 00 00 00 00 00</span>
<span class="a by" style="left:463px;top:804.3px;">................</span>
<span class="a ad" style="left:7px;top:817.3px;">004021BE</span>
<span class="a by" style="left:80px;top:817.3px;">00 00 00 00 00 00 00 00 00 00 00 00 00 00 00 00</span>
<span class="a by" style="left:463px;top:817.3px;">................</span>
<span class="a ad" style="left:7px;top:830.3px;">004021CE</span>
<span class="a by" style="left:80px;top:830.3px;">00 00 00 00 00 00 00 00 00 00 00 00 00 00 00 00</span>
<span class="a by" style="left:463px;top:830.3px;">................</span>
<span class="a ad" style="left:7px;top:843.3px;">004021DE</span>
<span class="a by" style="left:80px;top:843.3px;">00 00 00 00 00 00 00 00 00 00 00 00 00 00 00 00</span>
<span class="a by" style="left:463px;top:843.3px;">................</span>
<span class="a ad" style="left:7px;top:856.3px;">004021EE</span>
<span class="a by" style="left:80px;top:856.3px;">00 00 00 00 00 00 00 00 00 00 00 00 00 00 00 00</span>
<span class="a by" style="left:463px;top:856.3px;">................</span>
<span class="a ad" style="left:7px;top:869.3px;">004021FE</span>
<span class="a by" style="left:80px;top:869.3px;">00 00 00 00 00 00 00 00 00 00 00 00 00 00 00 00</span>
<span class="a by" style="left:463px;top:869.3px;">................</span>
<span class="a ad" style="left:7px;top:882.3px;">0040220E</span>
<span class="a by" style="left:80px;top:882.3px;">00 00 00 00 00 00 00 00 00 00 00 00 00 00 00 00</span>
<span class="a by" style="left:463px;top:882.3px;">................</span>
<span class="a ad" style="left:7px;top:895.3px;">0040221E</span>
<span class="a by" style="left:80px;top:895.3px;">00 00 00 00 00 00 00 00 00 00 00 00 00 00 00 00</span>
<span class="a by" style="left:463px;top:895.3px;">................</span>
<span class="a ad" style="left:7px;top:908.3px;">0040222E</span>
<span class="a by" style="left:80px;top:908.3px;">00 00 00 00 00 00 00 00 00 00 00 00 00 00 00 00</span>
<span class="a by" style="left:463px;top:908.3px;">................</span>
<span class="a ad" style="left:7px;top:921.3px;">0040223E</span>
<span class="a by" style="left:80px;top:921.3px;">00 00 00 00 00 00 00 00 00 00 00 00 00 00 00 00</span>
<span class="a by" style="left:463px;top:921.3px;">................</span>
<span class="a ad" style="left:7px;top:934.3px;">0040224E</span>
<span class="a by" style="left:80px;top:934.3px;">00 00 00 00 00 00 00 00 00 00 00 00 00 00 00 00</span>
<span class="a by" style="left:463px;top:934.3px;">................</span>
<span class="a ad" style="left:7px;top:947.3px;">0040225E</span>
<span class="a by" style="left:80px;top:947.3px;">00 00 00 00 00 00 00 00 00 00 00 00 00 00 00 00</span>
<span class="a by" style="left:463px;top:947.3px;">................</span>
<span class="a ad" style="left:7px;top:960.3px;">0040226E</span>
<span class="a by" style="left:80px;top:960.3px;">00 00 00 00 00 00 00 00 00 00 00 00 00 00 00 00</span>
<span class="a by" style="left:463px;top:960.3px;">................</span>
<span class="a ad" style="left:7px;top:973.3px;">0040227E</span>
<span class="a by" style="left:80px;top:973.3px;">00 00 00 00 00 00 00 00 00 00 00 00 00 00 00 00</span>
<span class="a by" style="left:463px;top:973.3px;">................</span>
<div class="a" style="left:171px;top:764px;width:1px;height:221px;background:#606060;"></div>
<div class="a" style="left:267px;top:764px;width:1px;height:221px;background:#606060;"></div>
<div class="a" style="left:363px;top:764px;width:1px;height:221px;background:#606060;"></div>
<svg class="a" style="left:1534px;top:752.5px" width="8" height="6.8"><path d="M0 6.8L4.0 0L8 6.8z" fill="#9a9a9a"/></svg>
<svg class="a" style="left:1534px;top:974px" width="8" height="6.8"><path d="M0 0L8 0L4.0 6.8z" fill="#9a9a9a"/></svg>
<div class="sbt" style="left:1533px;top:765px;width:10px;height:203px"></div><div class="sb" style="left:1533px;top:774px;width:10px;height:98px"></div>
<div class="a" style="left:1549px;top:718px;width:1px;height:268px;background:#474747;"></div>
<div class="a" style="left:1528px;top:764px;width:1px;height:221px;background:#686868;"></div>
<div class="a" style="left:2px;top:764px;width:1527px;height:1px;background:#2e2e2e;"></div>
<div class="a" style="left:1551px;top:719.5px;width:990px;height:13px;background:#3c3c3c;"></div>
<span class="a " style="left:1555px;top:720.3px;color:#96ee52">0019FDC4</span>
<span class="a by" style="left:1627px;top:720.3px;">0040218E</span>
<span class="a by" style="left:1702px;top:720.3px;">"junk"</span>
<span class="a " style="left:1555px;top:733.3px;color:#aaa8a2">0019FDC8</span>
<span class="a by" style="left:1627px;top:733.3px;">00401232</span>
<span class="a pk" style="left:1702px;top:733.3px;"><i class="cj13">返回到</i> crackme.sub_401128+10A <i class="cj13">自</i> crackme.sub_40137E</span>
<span class="a " style="left:1555px;top:746.3px;color:#aaa8a2">0019FDCC</span>
<span class="a by" style="left:1627px;top:746.3px;">0040218E</span>
<span class="a by" style="left:1702px;top:746.3px;">"junk"</span>
<span class="a " style="left:1555px;top:759.3px;color:#b49af4">0019FDD0</span>
<span class="a by" style="left:1627px;top:759.3px;">00401128</span>
<span class="a pk" style="left:1702px;top:759.3px;"><i class="cj13">返回到</i> crackme.sub_401128 <i class="cj13">自</i> crackme.00401512</span>
<span class="a " style="left:1555px;top:772.3px;color:#aaa8a2">0019FDD4</span>
<span class="a by" style="left:1627px;top:772.3px;">00000111</span>
<span class="a " style="left:1555px;top:785.3px;color:#aaa8a2">0019FDD8</span>
<span class="a by" style="left:1627px;top:785.3px;">00000000</span>
<span class="a " style="left:1555px;top:798.3px;color:#aaa8a2">0019FDDC</span>
<span class="a by" style="left:1627px;top:798.3px;">0019FE08</span>
<span class="a " style="left:1555px;top:811.3px;color:#aaa8a2">0019FDE0</span>
<span class="a by" style="left:1630px;top:811.3px;">76E947AB</span>
<span class="a pk" style="left:1702px;top:811.3px;"><i class="cj13">返回到</i> user32.sub_76E94780+2B <i class="cj13">自</i> ???</span>
<span class="a " style="left:1555px;top:824.3px;color:#aaa8a2">0019FDE4</span>
<span class="a by" style="left:1630px;top:824.3px;">001507DC</span>
<span class="a " style="left:1555px;top:837.3px;color:#aaa8a2">0019FDE8</span>
<span class="a by" style="left:1630px;top:837.3px;">00000111</span>
<span class="a " style="left:1555px;top:850.3px;color:#aaa8a2">0019FDEC</span>
<span class="a by" style="left:1630px;top:850.3px;">00000066</span>
<span class="a " style="left:1555px;top:863.3px;color:#aaa8a2">0019FDF0</span>
<span class="a by" style="left:1630px;top:863.3px;">00000000</span>
<span class="a " style="left:1555px;top:876.3px;color:#aaa8a2">0019FDF4</span>
<span class="a by" style="left:1630px;top:876.3px;">00000000</span>
<span class="a " style="left:1555px;top:889.3px;color:#aaa8a2">0019FDF8</span>
<span class="a by" style="left:1630px;top:889.3px;">DCBAABCD</span>
<span class="a " style="left:1555px;top:902.3px;color:#b49af4">0019FDFC</span>
<span class="a by" style="left:1630px;top:902.3px;">00401128</span>
<span class="a pk" style="left:1702px;top:902.3px;"><i class="cj13">返回到</i> crackme.sub_401128 <i class="cj13">自</i> crackme.00401512</span>
<span class="a " style="left:1555px;top:915.3px;color:#aaa8a2">0019FE00</span>
<span class="a by" style="left:1630px;top:915.3px;">00000111</span>
<span class="a " style="left:1555px;top:928.3px;color:#aaa8a2">0019FE04</span>
<span class="a by" style="left:1630px;top:928.3px;">00000000</span>
<span class="a " style="left:1555px;top:941.3px;color:#aaa8a2">0019FE08</span>
<span class="a by" style="left:1630px;top:941.3px;">0019FEEC</span>
<span class="a " style="left:1555px;top:954.3px;color:#aaa8a2">0019FE0C</span>
<span class="a by" style="left:1630px;top:954.3px;">76E752AC</span>
<span class="a pk" style="left:1702px;top:954.3px;"><i class="cj13">返回到</i> user32.sub_76E74F00+3AC <i class="cj13">自</i> user32.sub_76E94780</span>
<div class="a" style="left:1622px;top:719px;width:1px;height:248px;background:#5a5a5a;"></div>
<div class="a" style="left:1696px;top:719px;width:1px;height:248px;background:#5a5a5a;"></div>
<div class="a" style="left:1624px;top:814.3px;width:2px;height:137.0px;background:#f2837a;"></div>
<div class="a" style="left:1624px;top:814.3px;width:5px;height:2px;background:#f2837a;"></div>
<div class="a" style="left:1624px;top:949.3px;width:5px;height:2px;background:#f2837a;"></div>
<div class="a" style="left:1624px;top:957.3px;width:2px;height:10.0px;background:#f2837a;"></div>
<div class="a" style="left:1624px;top:957.3px;width:5px;height:2px;background:#f2837a;"></div>
<svg class="a" style="left:2546px;top:725px" width="8" height="6.8"><path d="M0 6.8L4.0 0L8 6.8z" fill="#9a9a9a"/></svg>
<svg class="a" style="left:2546px;top:957px" width="8" height="6.8"><path d="M0 0L8 0L4.0 6.8z" fill="#9a9a9a"/></svg>
<div class="sbt" style="left:2545px;top:737px;width:10px;height:214px"></div><div class="sb" style="left:2545px;top:928px;width:10px;height:23px"></div>
<svg class="a" style="left:1556px;top:973px" width="6.8" height="8"><path d="M6.8 0L0 4.0L6.8 8z" fill="#9a9a9a"/></svg>
<svg class="a" style="left:2529px;top:973px" width="6.8" height="8"><path d="M0 0L6.8 4.0L0 8z" fill="#9a9a9a"/></svg>
<div class="sbt" style="left:1567px;top:972px;width:956px;height:10px"></div><div class="sb" style="left:1567px;top:972px;width:343px;height:10px"></div>
<span class="a ui" style="left:2px;top:997px;">命令<b style="width:6px"><i>:</i></b></span>
<div class="a" style="left:38px;top:993px;width:2416px;height:20px;background:#313131;"></div>
<span class="a ui" style="left:2460px;top:997px;">默认</span>
<svg class="a" style="left:2545.5px;top:1000.5px" width="9" height="4.5"><path d="M0 0L9 0L4.5 4.5z" fill="#9a9a9a"/></svg>
<span class="a ui" style="left:12px;top:1023px;color:#a9a94a">已暂停</span>
<span class="a ui" style="left:66px;top:1023.5px;">内存断点<b style="width:6px"><i> </i></b>（读写和执行）于<b style="width:234px"><i> crackme.00402000 (00402000, 0040218E)!</i></b></span>
<span class="a ui" style="left:2422px;top:1024px;">已调试时间：<b style="width:66px"><i> 2:00:52:17</i></b></span>
<div class="a" style="left:0px;top:1040px;width:2560px;height:1px;background:#1f1d33;"></div>
</div>
</body></html>
